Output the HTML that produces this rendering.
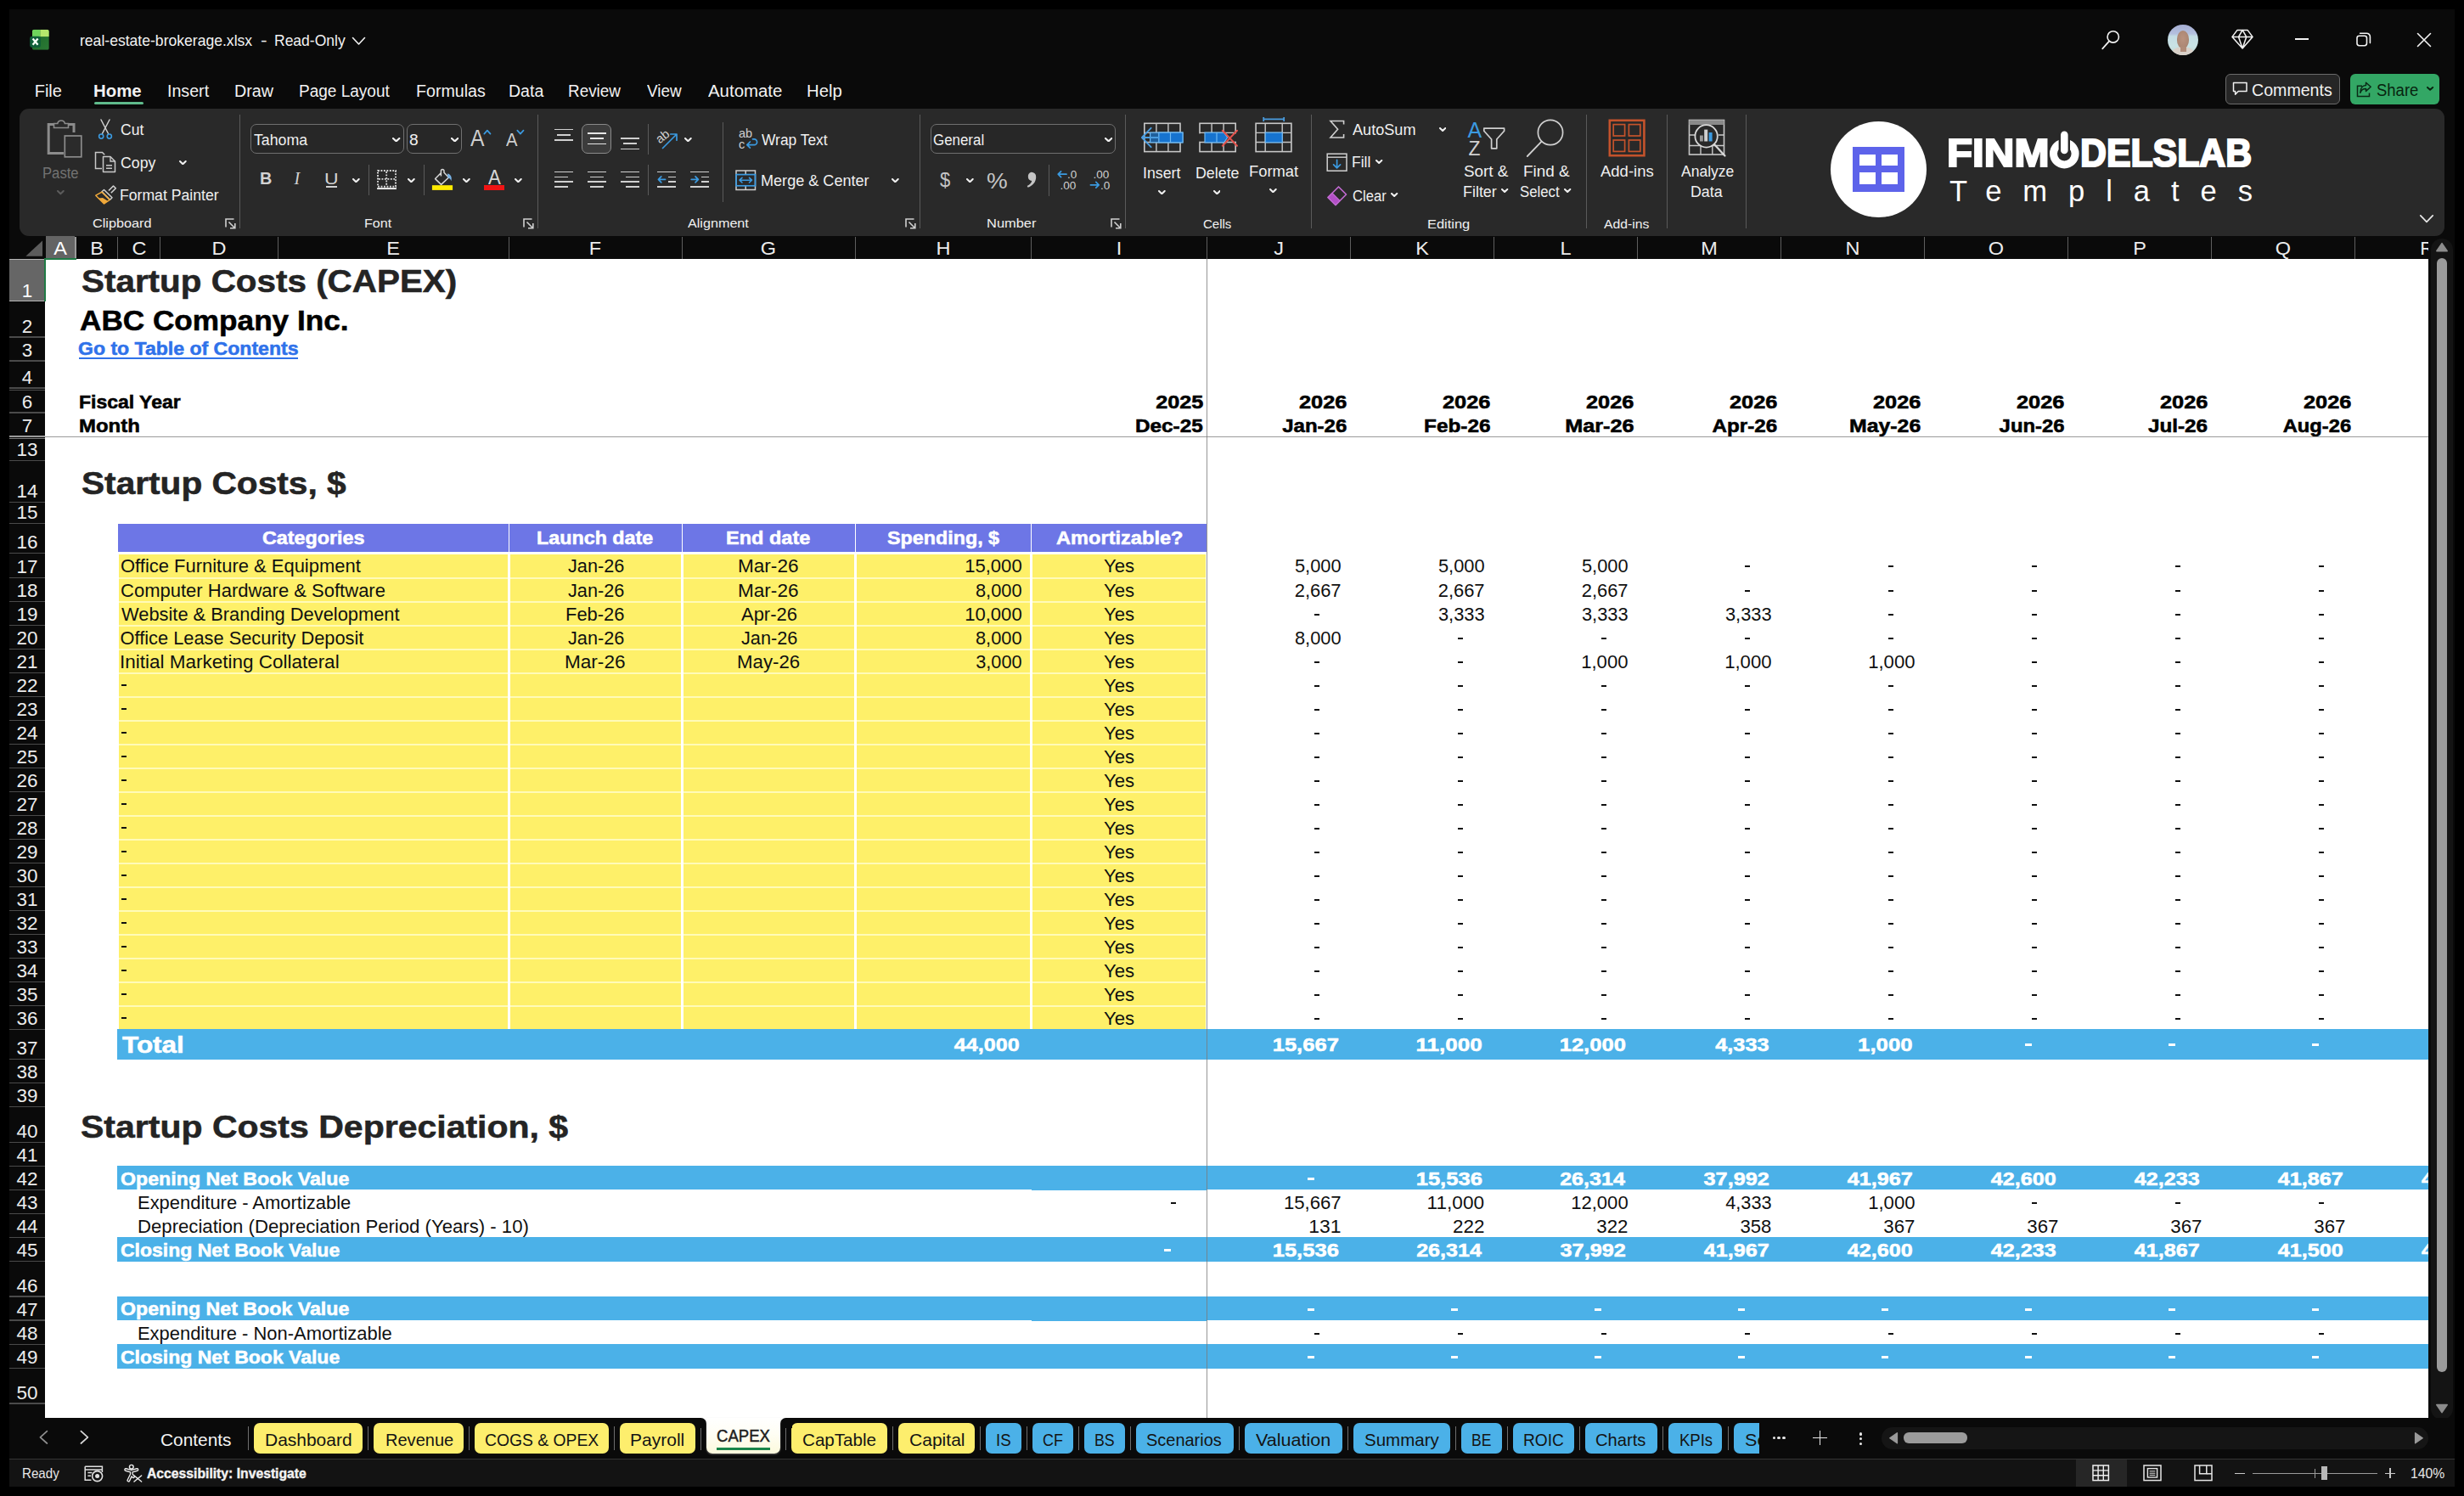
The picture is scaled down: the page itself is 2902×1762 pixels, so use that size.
<!DOCTYPE html>
<html><head><meta charset="utf-8"><title>real-estate-brokerage.xlsx</title><style>
html,body{margin:0;padding:0}
body{width:2902px;height:1762px;background:#000;overflow:hidden;position:relative;font-family:"Liberation Sans",sans-serif}
.t{position:absolute;white-space:pre;line-height:1}
.r{position:absolute;display:block}
</style></head><body>
<div class="r" style="left:11.00px;top:11.00px;width:2880.00px;height:1740.00px;background:#0a0a0a;"></div>
<svg class="r" style="left:34.00px;top:34.00px;" width="26" height="26" viewBox="0 0 26 26"><defs><clipPath id="xb"><rect x="3.9" y="0.8" width="19.9" height="24" rx="2.6"/></clipPath><linearGradient id="xg" x1="0" y1="0" x2="1" y2="1"><stop offset="0" stop-color="#1a6527"/><stop offset="1" stop-color="#2b7a35"/></linearGradient></defs><g clip-path="url(#xb)"><rect x="3.9" y="0.8" width="19.9" height="24" fill="url(#xg)"/><rect x="3.9" y="0.8" width="9.5" height="8.3" fill="#6ed45c"/><rect x="13.4" y="0.8" width="10.4" height="8.3" fill="#b5e76c"/></g><rect x="1.2" y="8.7" width="12.7" height="13.3" rx="2.4" fill="#0f5f39"/><path d="M4.6 11.5 L10.6 18.7 M10.6 11.5 L4.6 18.7" stroke="#f4fff6" stroke-width="2.3" stroke-linecap="butt"/></svg>
<div class="t " style="top:38.00px;font-size:19px;color:#f2f2f2;left:94.44px;transform:scaleX(0.9248);transform-origin:0 50%;">real-estate-brokerage.xlsx</div>
<div class="t " style="top:38.00px;font-size:19px;color:#f2f2f2;left:306.60px;transform:scaleX(1.2);transform-origin:0 50%;">-</div>
<div class="t " style="top:38.00px;font-size:19px;color:#f2f2f2;left:323.22px;transform:scaleX(0.921);transform-origin:0 50%;">Read-Only</div>
<svg class="r" style="left:413.50px;top:42.50px;" width="17" height="11" viewBox="0 0 17 11"><path d="M1.5 1.5 L8.5 9 L15.5 1.5" fill="none" stroke="#f2f2f2" stroke-width="1.6" stroke-linecap="round" stroke-linejoin="round"/></svg>
<svg class="r" style="left:2472.00px;top:34.00px;" width="26" height="28" viewBox="0 0 26 28"><circle cx="16.75" cy="9.4" r="6.7" fill="none" stroke="#f2f2f2" stroke-width="1.6"/><path d="M12 14.6 L4.2 23.4" stroke="#f2f2f2" stroke-width="1.7" stroke-linecap="round"/></svg>
<div class="r" style="left:2553px;top:28.8px;width:36px;height:36px;border-radius:50%;overflow:hidden;background:linear-gradient(#a6aed3 0%, #b4c0de 30%, #c4dde4 38%, #c9e3e5 70%, #c2d6d2 100%);"><div class="r" style="left:5px;top:26px;width:26px;height:16px;border-radius:50% 50% 0 0;background:#d9d1c9"></div><div class="r" style="left:10.6px;top:7px;width:14.8px;height:21px;border-radius:48% 48% 46% 46%;background:radial-gradient(ellipse at 50% 45%, #b9927f 0%, #ad8875 60%, #9a7a6b 100%)"></div><div class="r" style="left:14.5px;top:26.5px;width:7px;height:6px;background:#b08c79"></div></div>
<svg class="r" style="left:2628.00px;top:34.00px;" width="27" height="25" viewBox="0 0 27 25"><path d="M7 1.4 H19.05 L25 9.4 L13.1 23.05 L1 9.4 Z M1 9.4 H25 M13.1 1.4 L8.5 9.4 L13.1 23.05 L17.7 9.4 Z" fill="none" stroke="#f2f2f2" stroke-width="1.55" stroke-linejoin="round"/></svg>
<div class="r" style="left:2703.00px;top:45.20px;width:16.00px;height:1.60px;background:#f2f2f2;"></div>
<svg class="r" style="left:2774.50px;top:38.00px;" width="18" height="18" viewBox="0 0 18 18"><rect x="1" y="4.2" width="11.5" height="11.5" rx="2.6" fill="none" stroke="#f2f2f2" stroke-width="1.6"/><path d="M4.6 1.2 H12.4 a4 4 0 0 1 4 4 V12.6" fill="none" stroke="#f2f2f2" stroke-width="1.6" stroke-linecap="round"/></svg>
<svg class="r" style="left:2846.00px;top:38.00px;" width="18" height="18" viewBox="0 0 18 18"><path d="M1.5 1.5 L16.5 16.5 M16.5 1.5 L1.5 16.5" stroke="#f2f2f2" stroke-width="1.6" stroke-linecap="round"/></svg>
<div class="t " style="top:97.00px;font-size:20px;color:#f2f2f2;left:40.70px;">File</div>
<div class="t " style="top:97.00px;font-size:20px;color:#f2f2f2;font-weight:700;left:110.33px;transform:scaleX(1.0195);transform-origin:0 50%;">Home</div>
<div class="t " style="top:97.00px;font-size:20px;color:#f2f2f2;left:196.58px;transform:scaleX(0.9812);transform-origin:0 50%;">Insert</div>
<div class="t " style="top:97.00px;font-size:20px;color:#f2f2f2;left:275.82px;transform:scaleX(0.9856);transform-origin:0 50%;">Draw</div>
<div class="t " style="top:97.00px;font-size:20px;color:#f2f2f2;left:351.77px;transform:scaleX(0.9508);transform-origin:0 50%;">Page Layout</div>
<div class="t " style="top:97.00px;font-size:20px;color:#f2f2f2;left:489.73px;transform:scaleX(0.9822);transform-origin:0 50%;">Formulas</div>
<div class="t " style="top:97.00px;font-size:20px;color:#f2f2f2;left:599.13px;transform:scaleX(0.9767);transform-origin:0 50%;">Data</div>
<div class="t " style="top:97.00px;font-size:20px;color:#f2f2f2;left:669.48px;transform:scaleX(0.9437);transform-origin:0 50%;">Review</div>
<div class="t " style="top:97.00px;font-size:20px;color:#f2f2f2;left:762.20px;transform:scaleX(0.9442);transform-origin:0 50%;">View</div>
<div class="t " style="top:97.00px;font-size:20px;color:#f2f2f2;left:834.00px;transform:scaleX(1.0206);transform-origin:0 50%;">Automate</div>
<div class="t " style="top:97.00px;font-size:20px;color:#f2f2f2;left:950.18px;transform:scaleX(1.0142);transform-origin:0 50%;">Help</div>
<div class="r" style="left:111.00px;top:119.70px;width:58.00px;height:3.40px;background:#5fba8b;border-radius:2px;"></div>
<div class="r" style="left:2621px;top:87px;width:133px;height:34px;border:1.3px solid #6b6b6b;border-radius:6px;background:#262626"></div>
<svg class="r" style="left:2628.50px;top:96.00px;" width="19" height="18" viewBox="0 0 19 18"><path d="M1.5 1.5 H17 V11.5 H7.2 L3.6 15.2 V11.5 H1.5 Z" fill="none" stroke="#f2f2f2" stroke-width="1.5" stroke-linejoin="round"/></svg>
<div class="t " style="top:97.00px;font-size:19.3px;color:#f2f2f2;left:2651.98px;transform:scaleX(1.0164);transform-origin:0 50%;">Comments</div>
<div class="r" style="left:2768.00px;top:87.00px;width:105.00px;height:36.00px;background:#33a765;border-radius:6px;"></div>
<svg class="r" style="left:2774.50px;top:96.00px;" width="19" height="19" viewBox="0 0 19 19"><path d="M7 5.2 H1.5 V17.5 H15.5 V13.5" fill="none" stroke="#0a2a16" stroke-width="1.5"/><path d="M11.5 1.2 L17.2 6.3 L11.5 11.4 V8.4 C8 8.4 5.8 10 4.8 13.2 C4.8 7.8 7.6 4.6 11.5 4.4 Z" fill="none" stroke="#0a2a16" stroke-width="1.5" stroke-linejoin="round"/></svg>
<div class="t " style="top:97.00px;font-size:19.3px;color:#08240f;left:2798.84px;transform:scaleX(0.9588);transform-origin:0 50%;">Share</div>
<svg class="r" style="left:2858.40px;top:102.10px;" width="8.2" height="4.8" viewBox="0 0 8.2 4.8"><path d="M1 1 L4.1 3.8 L7.2 1" fill="none" stroke="#08240f" stroke-width="1.9500000000000002" stroke-linecap="round" stroke-linejoin="round"/></svg>
<div class="r" style="left:22.50px;top:128.00px;width:2856.50px;height:150.00px;background:#292929;border-radius:11px;"></div>
<div class="r" style="left:281.90px;top:134.60px;width:1.30px;height:134.20px;background:#5a5a5a;"></div>
<div class="r" style="left:633.00px;top:134.60px;width:1.30px;height:134.20px;background:#5a5a5a;"></div>
<div class="r" style="left:1083.00px;top:134.60px;width:1.30px;height:134.20px;background:#5a5a5a;"></div>
<div class="r" style="left:1324.90px;top:134.60px;width:1.30px;height:134.20px;background:#5a5a5a;"></div>
<div class="r" style="left:1543.90px;top:134.60px;width:1.30px;height:134.20px;background:#5a5a5a;"></div>
<div class="r" style="left:1867.70px;top:134.60px;width:1.30px;height:134.20px;background:#5a5a5a;"></div>
<div class="r" style="left:1962.80px;top:134.60px;width:1.30px;height:134.20px;background:#5a5a5a;"></div>
<div class="r" style="left:2055.90px;top:134.60px;width:1.30px;height:134.20px;background:#5a5a5a;"></div>
<svg class="r" style="left:54.00px;top:140.00px;" width="44" height="47" viewBox="0 0 44 47"><path d="M10 6.5 H3.2 V40.5 H21" fill="none" stroke="#8c8c8c" stroke-width="3"/><path d="M26 6.5 H33 V16" fill="none" stroke="#8c8c8c" stroke-width="3"/><path d="M9.5 10.5 V5.5 H13.8 a4.4 4.4 0 0 1 8.6 0 H26.5 V10.5 Z" fill="none" stroke="#8c8c8c" stroke-width="1.6"/><rect x="22.3" y="20" width="19.5" height="24.8" fill="#2b2b2b" stroke="#8c8c8c" stroke-width="1.7"/></svg>
<div class="t " style="top:196.00px;font-size:17.6px;color:#727272;left:50.28px;transform:scaleX(0.9474);transform-origin:0 50%;">Paste</div>
<svg class="r" style="left:66.85px;top:224.35px;" width="8.7" height="5.3" viewBox="0 0 8.7 5.3"><path d="M1 1 L4.35 4.3 L7.7 1" fill="none" stroke="#5c5c5c" stroke-width="2.05" stroke-linecap="round" stroke-linejoin="round"/></svg>
<svg class="r" style="left:113.00px;top:139.00px;" width="22" height="27" viewBox="0 0 22 27"><path d="M6 2 L14.6 18.5 M16 2 L7.4 18.5" stroke="#d0d0d0" stroke-width="1.5" stroke-linecap="round"/><circle cx="6.2" cy="21.6" r="2.6" fill="none" stroke="#3b9ae0" stroke-width="1.6"/><circle cx="15.8" cy="21.6" r="2.6" fill="none" stroke="#3b9ae0" stroke-width="1.6"/></svg>
<div class="t " style="top:145.00px;font-size:17.6px;color:#f0f0f0;left:141.85px;transform:scaleX(0.9962);transform-origin:0 50%;">Cut</div>
<svg class="r" style="left:111.00px;top:178.00px;" width="27" height="26" viewBox="0 0 27 26"><path d="M9 20.5 H1.5 V1.5 H9.5 L12.2 4.2" fill="none" stroke="#c8c8c8" stroke-width="1.5"/><path d="M10.5 6.5 H19 L24.5 12 V24.5 H10.5 Z" fill="#2b2b2b" stroke="#c8c8c8" stroke-width="1.5" stroke-linejoin="round"/><path d="M19 6.5 V12 H24.5 M14 16.8 H21 M14 20.3 H21" fill="none" stroke="#c8c8c8" stroke-width="1.4"/></svg>
<div class="t " style="top:184.00px;font-size:17.6px;color:#f0f0f0;left:141.85px;transform:scaleX(1.0062);transform-origin:0 50%;">Copy</div>
<svg class="r" style="left:211.05px;top:189.15px;" width="8.7" height="5.3" viewBox="0 0 8.7 5.3"><path d="M1 1 L4.35 4.3 L7.7 1" fill="none" stroke="#f0f0f0" stroke-width="2.05" stroke-linecap="round" stroke-linejoin="round"/></svg>
<svg class="r" style="left:111.00px;top:217.00px;" width="27" height="25" viewBox="0 0 27 25"><path d="M17 7.5 L22.5 2 L25.3 4.8 L19.8 10.3" fill="none" stroke="#d0d0d0" stroke-width="1.6" stroke-linejoin="round"/><path d="M11.5 6.5 L21 15.8 L18.6 18.2 L9 8.8 Z" fill="none" stroke="#d0d0d0" stroke-width="1.5" stroke-linejoin="round"/><path d="M9 9.2 L1.8 13.2 L11.6 23 L18.2 18.4 Z" fill="none" stroke="#f0a93a" stroke-width="1.5" stroke-linejoin="round"/><path d="M5 16.4 L11.6 23 L16 19.8 L10 16 Z" fill="#f0a93a"/></svg>
<div class="t " style="top:222.00px;font-size:17.6px;color:#f0f0f0;left:141.10px;transform:scaleX(1.0017);transform-origin:0 50%;">Format Painter</div>
<div class="t " style="top:255.00px;font-size:15.4px;color:#f0f0f0;left:108.51px;transform:scaleX(1.0553);transform-origin:0 50%;">Clipboard</div>
<svg class="r" style="left:264.60px;top:256.60px;" width="13" height="13" viewBox="0 0 13 13"><path d="M1 10.5 V1 H10.5" fill="none" stroke="#d0d0d0" stroke-width="1.6"/><path d="M4.5 4.5 L11.5 11.5 M6 11.8 H11.8 V6" fill="none" stroke="#d0d0d0" stroke-width="1.6"/></svg>
<div class="r" style="left:295px;top:146px;width:179.00000000000003px;height:33.4px;border:1.3px solid #707070;border-radius:7px;background:#272727"></div>
<div class="t " style="top:157.00px;font-size:17.6px;color:#f0f0f0;left:298.65px;transform:scaleX(1.0088);transform-origin:0 50%;">Tahoma</div>
<svg class="r" style="left:462.45px;top:162.10px;" width="9.3" height="5.3999999999999995" viewBox="0 0 9.3 5.3999999999999995"><path d="M1 1 L4.65 4.3999999999999995 L8.3 1" fill="none" stroke="#f0f0f0" stroke-width="2.15" stroke-linecap="round" stroke-linejoin="round"/></svg>
<div class="r" style="left:479.4px;top:146px;width:62.799999999999976px;height:33.4px;border:1.3px solid #707070;border-radius:7px;background:#272727"></div>
<div class="t " style="top:157.00px;font-size:17.6px;color:#f0f0f0;left:481.98px;transform:scaleX(1.0909);transform-origin:0 50%;">8</div>
<svg class="r" style="left:530.65px;top:162.10px;" width="9.3" height="5.3999999999999995" viewBox="0 0 9.3 5.3999999999999995"><path d="M1 1 L4.65 4.3999999999999995 L8.3 1" fill="none" stroke="#f0f0f0" stroke-width="2.15" stroke-linecap="round" stroke-linejoin="round"/></svg>
<div class="t " style="top:149.00px;font-size:27.5px;color:#cfcfcf;left:554.40px;transform:scaleX(0.8986);transform-origin:0 50%;">A</div>
<svg class="r" style="left:569.00px;top:152.00px;" width="10" height="7" viewBox="0 0 10 7"><path d="M1.3 5.6 L4.9 1.6 L8.5 5.6" fill="none" stroke="#3b9ae0" stroke-width="1.7" stroke-linecap="round" stroke-linejoin="round"/></svg>
<div class="t " style="top:154.00px;font-size:22px;color:#cfcfcf;left:595.60px;transform:scaleX(0.9172);transform-origin:0 50%;">A</div>
<svg class="r" style="left:607.60px;top:152.00px;" width="10" height="7" viewBox="0 0 10 7"><path d="M1.3 1.6 L4.9 5.6 L8.5 1.6" fill="none" stroke="#3b9ae0" stroke-width="1.7" stroke-linecap="round" stroke-linejoin="round"/></svg>
<div class="t " style="top:201.00px;font-size:19.5px;color:#d2d2d2;font-weight:700;left:305.53px;transform:scaleX(1.0167);transform-origin:0 50%;">B</div>
<div class="t" style="left:346.5px;top:200px;font-size:20px;color:#d2d2d2;font-family:'Liberation Serif',serif;font-style:italic;">I</div>
<div class="t " style="top:201.00px;font-size:19px;color:#d2d2d2;left:382.09px;transform:scaleX(1.2093);transform-origin:0 50%;">U</div>
<div class="r" style="left:383.60px;top:219.30px;width:13.60px;height:1.50px;background:#d2d2d2;"></div>
<svg class="r" style="left:414.85px;top:209.95px;" width="8.7" height="5.3" viewBox="0 0 8.7 5.3"><path d="M1 1 L4.35 4.3 L7.7 1" fill="none" stroke="#f0f0f0" stroke-width="2.05" stroke-linecap="round" stroke-linejoin="round"/></svg>
<div class="r" style="left:433.60px;top:194.00px;width:1.30px;height:36.40px;background:#5a5a5a;"></div>
<svg class="r" style="left:443.00px;top:199.00px;" width="26" height="25" viewBox="0 0 26 25"><rect x="2" y="2" width="21" height="18.8" fill="none" stroke="#d8d8d8" stroke-width="1.9" stroke-dasharray="1.9 1.56"/><path d="M12.2 3 V20 M3 11.9 H22" stroke="#d8d8d8" stroke-width="1.8" stroke-dasharray="1.9 1.56"/><path d="M1.1 23.1 H23.9" stroke="#f4f4f4" stroke-width="1.9"/></svg>
<svg class="r" style="left:479.95px;top:209.95px;" width="8.7" height="5.3" viewBox="0 0 8.7 5.3"><path d="M1 1 L4.35 4.3 L7.7 1" fill="none" stroke="#f0f0f0" stroke-width="2.05" stroke-linecap="round" stroke-linejoin="round"/></svg>
<div class="r" style="left:498.90px;top:194.00px;width:1.30px;height:36.40px;background:#5a5a5a;"></div>
<svg class="r" style="left:508.00px;top:198.00px;" width="27" height="27" viewBox="0 0 27 27"><path d="M11.5 5.5 L4.6 12.6 L11.6 19.4 L20.5 11 L15 5.2 V3.4 a1.8 1.8 0 0 0 -3.6 0 V9.5" fill="none" stroke="#d6d6d6" stroke-width="1.5" stroke-linejoin="round"/><path d="M19 6.6 C23 7.2 24.6 11 23.4 15.2 C22.6 12.6 21.2 11.6 19.4 11.2 Z" fill="#79b3e6"/><rect x="0.9" y="20.2" width="24.2" height="5.7" fill="#ffeb00"/></svg>
<svg class="r" style="left:544.85px;top:209.95px;" width="8.7" height="5.3" viewBox="0 0 8.7 5.3"><path d="M1 1 L4.35 4.3 L7.7 1" fill="none" stroke="#f0f0f0" stroke-width="2.05" stroke-linecap="round" stroke-linejoin="round"/></svg>
<div class="t " style="top:198.00px;font-size:23.5px;color:#d6d6d6;left:574.60px;transform:scaleX(0.9484);transform-origin:0 50%;">A</div>
<div class="r" style="left:569.80px;top:218.00px;width:24.30px;height:5.90px;background:#f01414;"></div>
<svg class="r" style="left:605.85px;top:209.95px;" width="8.7" height="5.3" viewBox="0 0 8.7 5.3"><path d="M1 1 L4.35 4.3 L7.7 1" fill="none" stroke="#f0f0f0" stroke-width="2.05" stroke-linecap="round" stroke-linejoin="round"/></svg>
<div class="t " style="top:255.00px;font-size:15.4px;color:#f0f0f0;left:428.89px;transform:scaleX(1.0441);transform-origin:0 50%;">Font</div>
<svg class="r" style="left:615.80px;top:256.60px;" width="13" height="13" viewBox="0 0 13 13"><path d="M1 10.5 V1 H10.5" fill="none" stroke="#d0d0d0" stroke-width="1.6"/><path d="M4.5 4.5 L11.5 11.5 M6 11.8 H11.8 V6" fill="none" stroke="#d0d0d0" stroke-width="1.6"/></svg>
<div class="r" style="left:652.90px;top:151.70px;width:22.00px;height:1.60px;background:#d0d0d0;"></div>
<div class="r" style="left:655.90px;top:158.00px;width:16.00px;height:1.60px;background:#d0d0d0;"></div>
<div class="r" style="left:652.90px;top:164.40px;width:22.00px;height:1.60px;background:#d0d0d0;"></div>
<div class="r" style="left:685.3px;top:146.3px;width:32.8px;height:32.6px;border:1.3px solid #8a8a8a;border-radius:7px;background:#3c3c3c"></div>
<div class="r" style="left:692.00px;top:156.10px;width:22.00px;height:1.60px;background:#e6e6e6;"></div>
<div class="r" style="left:695.00px;top:162.30px;width:16.00px;height:1.60px;background:#e6e6e6;"></div>
<div class="r" style="left:692.00px;top:168.50px;width:22.00px;height:1.60px;background:#e6e6e6;"></div>
<div class="r" style="left:731.00px;top:162.20px;width:22.00px;height:1.60px;background:#d0d0d0;"></div>
<div class="r" style="left:734.00px;top:168.40px;width:16.00px;height:1.60px;background:#d0d0d0;"></div>
<div class="r" style="left:731.00px;top:174.60px;width:22.00px;height:1.60px;background:#d0d0d0;"></div>
<div class="r" style="left:762.90px;top:145.80px;width:1.30px;height:36.20px;background:#5a5a5a;"></div>
<svg class="r" style="left:771.00px;top:149.00px;" width="29" height="28" viewBox="0 0 29 28"><text x="2" y="17" font-family="Liberation Sans" font-size="14.5" fill="#d0d0d0" transform="rotate(-38 9 13)">ab</text><path d="M9.5 25.5 L25.5 9.5 M18.8 9 H26 V16.2" fill="none" stroke="#3b9ae0" stroke-width="1.7" stroke-linecap="round" stroke-linejoin="round"/></svg>
<svg class="r" style="left:805.95px;top:161.75px;" width="8.7" height="5.3" viewBox="0 0 8.7 5.3"><path d="M1 1 L4.35 4.3 L7.7 1" fill="none" stroke="#f0f0f0" stroke-width="2.05" stroke-linecap="round" stroke-linejoin="round"/></svg>
<div class="r" style="left:850.70px;top:143.80px;width:1.30px;height:94.50px;background:#5a5a5a;"></div>
<svg class="r" style="left:869.00px;top:150.00px;" width="24" height="27" viewBox="0 0 24 27"><text x="1" y="11.6" font-family="Liberation Sans" font-size="14.5" fill="#d0d0d0">ab</text><text x="1" y="24.6" font-family="Liberation Sans" font-size="14.5" fill="#d0d0d0">c</text><path d="M17.5 13.8 H19.2 a3.3 3.3 0 0 1 0 6.8 H11.2 M14.4 17 L10.8 20.6 L14.4 24.2" fill="none" stroke="#3b9ae0" stroke-width="1.7" stroke-linecap="round" stroke-linejoin="round"/></svg>
<div class="t " style="top:157.00px;font-size:17.6px;color:#f0f0f0;left:897.40px;transform:scaleX(0.9879);transform-origin:0 50%;">Wrap Text</div>
<div class="r" style="left:652.90px;top:201.70px;width:22.00px;height:1.60px;background:#d0d0d0;"></div>
<div class="r" style="left:652.90px;top:207.60px;width:16.00px;height:1.60px;background:#d0d0d0;"></div>
<div class="r" style="left:652.90px;top:213.40px;width:22.00px;height:1.60px;background:#d0d0d0;"></div>
<div class="r" style="left:652.90px;top:219.30px;width:16.00px;height:1.60px;background:#d0d0d0;"></div>
<div class="r" style="left:692.00px;top:201.70px;width:22.00px;height:1.60px;background:#d0d0d0;"></div>
<div class="r" style="left:695.00px;top:207.60px;width:16.00px;height:1.60px;background:#d0d0d0;"></div>
<div class="r" style="left:692.00px;top:213.40px;width:22.00px;height:1.60px;background:#d0d0d0;"></div>
<div class="r" style="left:695.00px;top:219.30px;width:16.00px;height:1.60px;background:#d0d0d0;"></div>
<div class="r" style="left:731.00px;top:201.70px;width:22.00px;height:1.60px;background:#d0d0d0;"></div>
<div class="r" style="left:737.00px;top:207.60px;width:16.00px;height:1.60px;background:#d0d0d0;"></div>
<div class="r" style="left:731.00px;top:213.40px;width:22.00px;height:1.60px;background:#d0d0d0;"></div>
<div class="r" style="left:737.00px;top:219.30px;width:16.00px;height:1.60px;background:#d0d0d0;"></div>
<div class="r" style="left:762.90px;top:194.40px;width:1.30px;height:35.40px;background:#5a5a5a;"></div>
<div class="r" style="left:774.00px;top:201.70px;width:22.00px;height:1.60px;background:#d0d0d0;"></div>
<div class="r" style="left:774.00px;top:219.30px;width:22.00px;height:1.60px;background:#d0d0d0;"></div>
<div class="r" style="left:786.50px;top:207.60px;width:9.50px;height:1.60px;background:#d0d0d0;"></div>
<div class="r" style="left:786.50px;top:213.40px;width:9.50px;height:1.60px;background:#d0d0d0;"></div>
<svg class="r" style="left:774.00px;top:206.00px;" width="11" height="11" viewBox="0 0 11 11"><path d="M9.6 5.3 H1.6 M4.8 1.8 L1.4 5.3 L4.8 8.8" fill="none" stroke="#3b9ae0" stroke-width="1.7" stroke-linecap="round" stroke-linejoin="round"/></svg>
<div class="r" style="left:813.10px;top:201.70px;width:22.00px;height:1.60px;background:#d0d0d0;"></div>
<div class="r" style="left:813.10px;top:219.30px;width:22.00px;height:1.60px;background:#d0d0d0;"></div>
<div class="r" style="left:825.60px;top:207.60px;width:9.50px;height:1.60px;background:#d0d0d0;"></div>
<div class="r" style="left:825.60px;top:213.40px;width:9.50px;height:1.60px;background:#d0d0d0;"></div>
<svg class="r" style="left:813.10px;top:206.00px;" width="11" height="11" viewBox="0 0 11 11"><path d="M1.2 5.3 H9.2 M6 1.8 L9.4 5.3 L6 8.8" fill="none" stroke="#3b9ae0" stroke-width="1.7" stroke-linecap="round" stroke-linejoin="round"/></svg>
<svg class="r" style="left:866.00px;top:199.50px;" width="25" height="25" viewBox="0 0 25 25"><rect x="1" y="1" width="22.5" height="22.5" fill="none" stroke="#d0d0d0" stroke-width="1.5"/><path d="M12.2 1 V5.5 M12.2 19 V23.5" stroke="#d0d0d0" stroke-width="1.5"/><rect x="1" y="5.6" width="22.5" height="13.2" fill="none" stroke="#3b9ae0" stroke-width="1.7"/><path d="M5.2 12.2 H19.3 M8 9.4 L5 12.2 L8 15 M16.5 9.4 L19.5 12.2 L16.5 15" fill="none" stroke="#3b9ae0" stroke-width="1.6" stroke-linecap="round" stroke-linejoin="round"/></svg>
<div class="t " style="top:205.00px;font-size:17.6px;color:#f0f0f0;left:895.86px;transform:scaleX(1.0278);transform-origin:0 50%;">Merge &amp; Center</div>
<svg class="r" style="left:1050.05px;top:209.95px;" width="8.7" height="5.3" viewBox="0 0 8.7 5.3"><path d="M1 1 L4.35 4.3 L7.7 1" fill="none" stroke="#f0f0f0" stroke-width="2.05" stroke-linecap="round" stroke-linejoin="round"/></svg>
<div class="t " style="top:255.00px;font-size:15.4px;color:#f0f0f0;left:810.30px;transform:scaleX(1.0496);transform-origin:0 50%;">Alignment</div>
<svg class="r" style="left:1065.60px;top:256.60px;" width="13" height="13" viewBox="0 0 13 13"><path d="M1 10.5 V1 H10.5" fill="none" stroke="#d0d0d0" stroke-width="1.6"/><path d="M4.5 4.5 L11.5 11.5 M6 11.8 H11.8 V6" fill="none" stroke="#d0d0d0" stroke-width="1.6"/></svg>
<div class="r" style="left:1096px;top:146.3px;width:215.6px;height:32.8px;border:1.3px solid #707070;border-radius:7px;background:#272727"></div>
<div class="t " style="top:157.00px;font-size:17.6px;color:#f0f0f0;left:1098.78px;transform:scaleX(0.9613);transform-origin:0 50%;">General</div>
<svg class="r" style="left:1300.75px;top:162.10px;" width="9.3" height="5.3999999999999995" viewBox="0 0 9.3 5.3999999999999995"><path d="M1 1 L4.65 4.3999999999999995 L8.3 1" fill="none" stroke="#f0f0f0" stroke-width="2.15" stroke-linecap="round" stroke-linejoin="round"/></svg>
<div class="t " style="top:200.00px;font-size:24px;color:#c4c4c4;left:1107.07px;transform:scaleX(0.9176);transform-origin:0 50%;">$</div>
<svg class="r" style="left:1137.95px;top:209.95px;" width="8.7" height="5.3" viewBox="0 0 8.7 5.3"><path d="M1 1 L4.35 4.3 L7.7 1" fill="none" stroke="#f0f0f0" stroke-width="2.05" stroke-linecap="round" stroke-linejoin="round"/></svg>
<div class="t " style="top:200.00px;font-size:26.5px;color:#c4c4c4;left:1162.35px;transform:scaleX(1.0483);transform-origin:0 50%;">%</div>
<svg class="r" style="left:1207.50px;top:202.00px;" width="14" height="21" viewBox="0 0 14 21"><path d="M6.6 0.8 a5.3 5.3 0 0 1 5.6 5.6 c0 5.8 -3.8 10.2 -9.6 12.4 l-0.9 -1.7 c3.3 -1.5 5.2 -3.6 5.5 -6 a5.3 5.3 0 0 1 -0.6 -10.3z" fill="#c4c4c4"/></svg>
<div class="r" style="left:1234.70px;top:193.60px;width:1.30px;height:37.10px;background:#5a5a5a;"></div>
<svg class="r" style="left:1243.50px;top:198.50px;" width="26" height="25" viewBox="0 0 26 25"><path d="M12 6.2 H2.4 M5.6 2.8 L2.2 6.2 L5.6 9.6" fill="none" stroke="#3b9ae0" stroke-width="1.7" stroke-linecap="round" stroke-linejoin="round"/><text x="13" y="11" font-family="Liberation Sans" font-size="13.5" fill="#d0d0d0">.0</text><text x="4.4" y="23.6" font-family="Liberation Sans" font-size="13.5" fill="#d0d0d0">.00</text></svg>
<svg class="r" style="left:1282.50px;top:198.50px;" width="26" height="25" viewBox="0 0 26 25"><text x="4.4" y="11" font-family="Liberation Sans" font-size="13.5" fill="#d0d0d0">.00</text><path d="M1.4 18.8 H11 M7.8 15.4 L11.2 18.8 L7.8 22.2" fill="none" stroke="#3b9ae0" stroke-width="1.7" stroke-linecap="round" stroke-linejoin="round"/><text x="13" y="23.6" font-family="Liberation Sans" font-size="13.5" fill="#d0d0d0">.0</text></svg>
<div class="t " style="top:255.00px;font-size:15.4px;color:#f0f0f0;left:1162.06px;transform:scaleX(1.0685);transform-origin:0 50%;">Number</div>
<svg class="r" style="left:1307.60px;top:256.80px;" width="13" height="13" viewBox="0 0 13 13"><path d="M1 10.5 V1 H10.5" fill="none" stroke="#d0d0d0" stroke-width="1.6"/><path d="M4.5 4.5 L11.5 11.5 M6 11.8 H11.8 V6" fill="none" stroke="#d0d0d0" stroke-width="1.6"/></svg>
<svg class="r" style="left:1343.00px;top:136.00px;" width="54" height="44" viewBox="0 0 54 44"><rect x="4.8" y="9.3" width="42.2" height="33.3" fill="none" stroke="#c8c8c8" stroke-width="1.6"/><path d="M18.9 9.3 V42.599999999999994" stroke="#c8c8c8" stroke-width="1.4"/><path d="M32.9 9.3 V42.599999999999994" stroke="#c8c8c8" stroke-width="1.4"/><path d="M4.8 20.4 H47.0" stroke="#c8c8c8" stroke-width="1.4"/><path d="M4.8 31.5 H47.0" stroke="#c8c8c8" stroke-width="1.4"/><rect x="11.6" y="20.1" width="38.4" height="11.7" fill="#1f5f9c" stroke="#6fb9f3" stroke-width="1.2"/><rect x="21.8" y="20.1" width="28.2" height="11.7" fill="#1673cf" stroke="#6fb9f3" stroke-width="1.2"/><path d="M35.5 20.1 V31.8" stroke="#6fb9f3" stroke-width="1.2"/><path d="M21 26 H2.4 M12.6 14.8 L1.9 26 L12.6 37.2" fill="none" stroke="#4a9de0" stroke-width="1.9" stroke-linecap="round" stroke-linejoin="round"/></svg>
<div class="t " style="top:196.00px;font-size:17.6px;color:#f0f0f0;left:1346.39px;transform:scaleX(1.0071);transform-origin:0 50%;">Insert</div>
<svg class="r" style="left:1363.95px;top:224.05px;" width="8.7" height="5.3" viewBox="0 0 8.7 5.3"><path d="M1 1 L4.35 4.3 L7.7 1" fill="none" stroke="#f0f0f0" stroke-width="2.05" stroke-linecap="round" stroke-linejoin="round"/></svg>
<svg class="r" style="left:1408.00px;top:136.00px;" width="54" height="44" viewBox="0 0 54 44"><rect x="5" y="9.3" width="42.2" height="33.3" fill="none" stroke="#c8c8c8" stroke-width="1.6"/><path d="M19.1 9.3 V42.599999999999994" stroke="#c8c8c8" stroke-width="1.4"/><path d="M33.1 9.3 V42.599999999999994" stroke="#c8c8c8" stroke-width="1.4"/><path d="M5 20.4 H47.2" stroke="#c8c8c8" stroke-width="1.4"/><path d="M5 31.5 H47.2" stroke="#c8c8c8" stroke-width="1.4"/><rect x="3.8" y="21.4" width="2.4" height="9.2" fill="#292929"/><rect x="46" y="21.4" width="2.4" height="9.2" fill="#292929"/><path d="M11 20.1 H33.6 L37.6 26 L33.6 31.8 H11 Z" fill="#1673cf" stroke="#6fb9f3" stroke-width="1.2"/><path d="M25 20.1 V31.8" stroke="#6fb9f3" stroke-width="1.2"/><path d="M31.8 17.8 L49 35.8 M49 17.8 L31.8 35.8" stroke="#e2524c" stroke-width="2" stroke-linecap="round"/></svg>
<div class="t " style="top:196.00px;font-size:17.6px;color:#f0f0f0;left:1408.28px;transform:scaleX(1.0124);transform-origin:0 50%;">Delete</div>
<svg class="r" style="left:1428.75px;top:224.05px;" width="8.7" height="5.3" viewBox="0 0 8.7 5.3"><path d="M1 1 L4.35 4.3 L7.7 1" fill="none" stroke="#f0f0f0" stroke-width="2.05" stroke-linecap="round" stroke-linejoin="round"/></svg>
<svg class="r" style="left:1474.00px;top:136.00px;" width="54" height="44" viewBox="0 0 54 44"><rect x="5.1" y="9.3" width="41.8" height="33.3" fill="none" stroke="#c8c8c8" stroke-width="1.6"/><path d="M16.2 9.3 V42.599999999999994" stroke="#c8c8c8" stroke-width="1.4"/><path d="M36.2 9.3 V42.599999999999994" stroke="#c8c8c8" stroke-width="1.4"/><path d="M5.1 20.4 H46.9" stroke="#c8c8c8" stroke-width="1.4"/><path d="M5.1 31.5 H46.9" stroke="#c8c8c8" stroke-width="1.4"/><rect x="16.2" y="20.1" width="20" height="11.7" fill="#1673cf" stroke="#6fb9f3" stroke-width="1.2"/><path d="M14.2 4.4 H38.2 M14.2 2 V6.9 M38.2 2 V6.9" stroke="#4a9de0" stroke-width="1.7"/></svg>
<div class="t " style="top:194.00px;font-size:17.6px;color:#f0f0f0;left:1471.03px;transform:scaleX(1.0444);transform-origin:0 50%;">Format</div>
<svg class="r" style="left:1495.05px;top:222.05px;" width="8.7" height="5.3" viewBox="0 0 8.7 5.3"><path d="M1 1 L4.35 4.3 L7.7 1" fill="none" stroke="#f0f0f0" stroke-width="2.05" stroke-linecap="round" stroke-linejoin="round"/></svg>
<div class="t " style="top:256.00px;font-size:15.4px;color:#f0f0f0;left:1417.27px;transform:scaleX(0.9758);transform-origin:0 50%;">Cells</div>
<svg class="r" style="left:1565.00px;top:140.50px;" width="20" height="23" viewBox="0 0 20 23"><path d="M17.6 5.6 V1.5 H2 L10.6 11.2 L2 21 H17.6 V17" fill="none" stroke="#d0d0d0" stroke-width="1.6" stroke-linejoin="miter"/></svg>
<div class="t " style="top:145.00px;font-size:17.6px;color:#f0f0f0;left:1593.30px;transform:scaleX(1.0302);transform-origin:0 50%;">AutoSum</div>
<svg class="r" style="left:1694.85px;top:150.05px;" width="8.3" height="5.1" viewBox="0 0 8.3 5.1"><path d="M1 1 L4.15 4.1 L7.3 1" fill="none" stroke="#f0f0f0" stroke-width="2.05" stroke-linecap="round" stroke-linejoin="round"/></svg>
<svg class="r" style="left:1562.00px;top:179.50px;" width="26" height="23" viewBox="0 0 26 23"><rect x="1.2" y="1.2" width="22.8" height="20" fill="none" stroke="#d0d0d0" stroke-width="1.5"/><path d="M1.2 5.2 H24" stroke="#d0d0d0" stroke-width="1.4"/><path d="M12.6 8.4 V17.6 M8.6 13.8 L12.6 17.8 L16.6 13.8" fill="none" stroke="#3b9ae0" stroke-width="1.7" stroke-linecap="round" stroke-linejoin="round"/></svg>
<div class="t " style="top:183.00px;font-size:17.6px;color:#f0f0f0;left:1592.20px;transform:scaleX(0.9975);transform-origin:0 50%;">Fill</div>
<svg class="r" style="left:1620.25px;top:187.85px;" width="8.3" height="5.1" viewBox="0 0 8.3 5.1"><path d="M1 1 L4.15 4.1 L7.3 1" fill="none" stroke="#f0f0f0" stroke-width="2.05" stroke-linecap="round" stroke-linejoin="round"/></svg>
<svg class="r" style="left:1562.00px;top:217.50px;" width="26" height="25" viewBox="0 0 26 25"><path d="M2 14.5 L14.5 2 L23.5 11 L11 23.5 Z" fill="none" stroke="#c06ad0" stroke-width="1.7" stroke-linejoin="round"/><path d="M2 14.5 L7 9.5 L16 18.5 L11 23.5 Z" fill="#b24fc6" stroke="#c06ad0" stroke-width="1.2" stroke-linejoin="round"/></svg>
<div class="t " style="top:223.00px;font-size:17.6px;color:#f0f0f0;left:1592.59px;transform:scaleX(0.9439);transform-origin:0 50%;">Clear</div>
<svg class="r" style="left:1638.45px;top:226.65px;" width="8.3" height="5.1" viewBox="0 0 8.3 5.1"><path d="M1 1 L4.15 4.1 L7.3 1" fill="none" stroke="#f0f0f0" stroke-width="2.05" stroke-linecap="round" stroke-linejoin="round"/></svg>
<svg class="r" style="left:1727.00px;top:139.00px;" width="48" height="45" viewBox="0 0 48 45"><text x="1.5" y="23" font-family="Liberation Sans" font-size="25" fill="#3b9ae0">A</text><text x="2.5" y="43.5" font-family="Liberation Sans" font-size="23" fill="#d0d0d0">Z</text><path d="M20.8 12.2 H44.6 V15.2 L35.8 25 V35.8 H29.6 V25 L20.8 15.2 Z" fill="none" stroke="#d0d0d0" stroke-width="1.7" stroke-linejoin="round"/></svg>
<div class="t " style="top:194.00px;font-size:17.6px;color:#f0f0f0;left:1724.40px;transform:scaleX(1.0729);transform-origin:0 50%;">Sort &amp;</div>
<div class="t " style="top:218.00px;font-size:17.6px;color:#f0f0f0;left:1722.97px;transform:scaleX(1.0174);transform-origin:0 50%;">Filter</div>
<svg class="r" style="left:1768.25px;top:221.85px;" width="8.3" height="5.1" viewBox="0 0 8.3 5.1"><path d="M1 1 L4.15 4.1 L7.3 1" fill="none" stroke="#f0f0f0" stroke-width="2.05" stroke-linecap="round" stroke-linejoin="round"/></svg>
<svg class="r" style="left:1796.00px;top:139.00px;" width="48" height="47" viewBox="0 0 48 47"><circle cx="30" cy="17" r="14.6" fill="none" stroke="#d0d0d0" stroke-width="1.7"/><path d="M19.6 27.6 L2.8 45" stroke="#d0d0d0" stroke-width="1.8" stroke-linecap="round"/></svg>
<div class="t " style="top:194.00px;font-size:17.6px;color:#f0f0f0;left:1793.69px;transform:scaleX(1.0735);transform-origin:0 50%;">Find &amp;</div>
<div class="t " style="top:218.00px;font-size:17.6px;color:#f0f0f0;left:1789.78px;transform:scaleX(0.9542);transform-origin:0 50%;">Select</div>
<svg class="r" style="left:1842.25px;top:221.85px;" width="8.3" height="5.1" viewBox="0 0 8.3 5.1"><path d="M1 1 L4.15 4.1 L7.3 1" fill="none" stroke="#f0f0f0" stroke-width="2.05" stroke-linecap="round" stroke-linejoin="round"/></svg>
<div class="t " style="top:256.00px;font-size:15.4px;color:#f0f0f0;left:1681.06px;transform:scaleX(1.0682);transform-origin:0 50%;">Editing</div>
<svg class="r" style="left:1894.00px;top:139.50px;" width="45" height="46" viewBox="0 0 45 46"><rect x="1.8" y="1.8" width="40.6" height="41.4" fill="none" stroke="#c4532c" stroke-width="2.6"/><rect x="6.2" y="6.6" width="13.4" height="13.4" fill="none" stroke="#c4532c" stroke-width="1.7"/><rect x="24.4" y="6.6" width="13.4" height="13.4" fill="none" stroke="#c4532c" stroke-width="1.7"/><rect x="6.2" y="25" width="13.4" height="13.4" fill="none" stroke="#c4532c" stroke-width="1.7"/><rect x="24.4" y="25" width="13.4" height="13.4" fill="none" stroke="#c4532c" stroke-width="1.7"/></svg>
<div class="t " style="top:194.00px;font-size:17.6px;color:#f0f0f0;left:1885.20px;transform:scaleX(1.0508);transform-origin:0 50%;">Add-ins</div>
<div class="t " style="top:256.00px;font-size:15.4px;color:#f0f0f0;left:1888.50px;transform:scaleX(1.0242);transform-origin:0 50%;">Add-ins</div>
<svg class="r" style="left:1987.50px;top:140.00px;" width="46" height="46" viewBox="0 0 46 46"><rect x="1.5" y="1.5" width="41" height="40.5" fill="none" stroke="#c8c8c8" stroke-width="1.6"/><rect x="1.5" y="1.5" width="41" height="5.5" fill="#8a8a8a"/><path d="M1.5 19 H8 M36 19 H42.5 M1.5 31.5 H42.5 M15 31.5 V42 M28.8 31.5 V42" stroke="#c8c8c8" stroke-width="1.4"/><circle cx="21.6" cy="20.4" r="13.2" fill="#292929" stroke="#d8d8d8" stroke-width="1.8"/><rect x="14" y="19.5" width="3.8" height="7" fill="#9a9a9a"/><rect x="19.2" y="12.6" width="4" height="13.9" fill="#d0d0d0"/><rect x="24.6" y="16" width="4" height="10.5" fill="#3b9ae0"/><path d="M31 30 L43.5 43.5" stroke="#d8d8d8" stroke-width="2.2" stroke-linecap="round"/></svg>
<div class="t " style="top:194.00px;font-size:17.6px;color:#f0f0f0;left:1980.00px;transform:scaleX(0.9943);transform-origin:0 50%;">Analyze</div>
<div class="t " style="top:218.00px;font-size:17.6px;color:#f0f0f0;left:1990.98px;transform:scaleX(1.0126);transform-origin:0 50%;">Data</div>
<div class="r" style="left:2156px;top:142.5px;width:113px;height:113px;border-radius:50%;background:#fff"></div>
<div class="r" style="left:2181.60px;top:172.70px;width:61.40px;height:53.20px;background:#5d63ea;"></div>
<div class="r" style="left:2190.00px;top:181.80px;width:18.60px;height:13.70px;background:#fff;"></div>
<div class="r" style="left:2190.00px;top:203.40px;width:18.60px;height:14.10px;background:#fff;"></div>
<div class="r" style="left:2216.10px;top:181.80px;width:18.60px;height:13.70px;background:#fff;"></div>
<div class="r" style="left:2216.10px;top:203.40px;width:18.60px;height:14.10px;background:#fff;"></div>
<div class="t " style="top:157.00px;font-size:46.8px;color:#fff;font-weight:700;left:2293.14px;transform:scaleX(1.0531);transform-origin:0 50%;-webkit-text-stroke:2.2px #fff;">FINM</div>
<div class="t " style="top:157.00px;font-size:46.8px;color:#fff;font-weight:700;left:2449.96px;transform:scaleX(0.9148);transform-origin:0 50%;-webkit-text-stroke:2.2px #fff;">DELSLAB</div>
<svg class="r" style="left:2412.00px;top:152.00px;" width="40" height="48" viewBox="0 0 40 48"><circle cx="19.3" cy="29.1" r="12.8" fill="none" stroke="#fff" stroke-width="9"/><rect x="12.6" y="0" width="13.4" height="31.5" rx="5" fill="#292929"/><rect x="15" y="2.6" width="8.6" height="26.6" rx="4.3" fill="#fff"/></svg>
<div class="t " style="top:208.00px;font-size:34.7px;color:#fff;left:2295.55px;transform:scaleX(0.9968);transform-origin:0 50%;letter-spacing:25px;">Templates</div>
<svg class="r" style="left:2848.50px;top:252.00px;" width="18" height="12" viewBox="0 0 18 12"><path d="M1.8 1.8 L9 9.4 L16.2 1.8" fill="none" stroke="#e6e6e6" stroke-width="1.7" stroke-linecap="round" stroke-linejoin="round"/></svg>
<div class="r" style="left:53.00px;top:305.00px;width:2807.00px;height:1365.00px;background:#fff;"></div>
<div class="r" style="left:53.50px;top:278.00px;width:34.90px;height:26.20px;background:#646464;"></div>
<div class="t " style="top:282.00px;font-size:22.6px;color:#fff;left:71.25px;transform:translateX(-50%) scaleX(1.04);">A</div>
<div class="r" style="left:88.40px;top:279.00px;width:1.20px;height:25.50px;background:#9a9a9a;"></div>
<div class="t " style="top:282.00px;font-size:22.6px;color:#ececec;left:113.75px;transform:translateX(-50%) scaleX(1.04);">B</div>
<div class="r" style="left:137.90px;top:279.00px;width:1.20px;height:25.50px;background:#5e5e5e;"></div>
<div class="t " style="top:282.00px;font-size:22.6px;color:#ececec;left:163.60px;transform:translateX(-50%) scaleX(1.04);">C</div>
<div class="r" style="left:188.10px;top:279.00px;width:1.20px;height:25.50px;background:#5e5e5e;"></div>
<div class="t " style="top:282.00px;font-size:22.6px;color:#ececec;left:258.00px;transform:translateX(-50%) scaleX(1.04);">D</div>
<div class="r" style="left:326.70px;top:279.00px;width:1.20px;height:25.50px;background:#5e5e5e;"></div>
<div class="t " style="top:282.00px;font-size:22.6px;color:#ececec;left:463.30px;transform:translateX(-50%) scaleX(1.04);">E</div>
<div class="r" style="left:598.70px;top:279.00px;width:1.20px;height:25.50px;background:#5e5e5e;"></div>
<div class="t " style="top:282.00px;font-size:22.6px;color:#ececec;left:701.35px;transform:translateX(-50%) scaleX(1.04);">F</div>
<div class="r" style="left:802.80px;top:279.00px;width:1.20px;height:25.50px;background:#5e5e5e;"></div>
<div class="t " style="top:282.00px;font-size:22.6px;color:#ececec;left:905.40px;transform:translateX(-50%) scaleX(1.04);">G</div>
<div class="r" style="left:1006.80px;top:279.00px;width:1.20px;height:25.50px;background:#5e5e5e;"></div>
<div class="t " style="top:282.00px;font-size:22.6px;color:#ececec;left:1110.90px;transform:translateX(-50%) scaleX(1.04);">H</div>
<div class="r" style="left:1213.80px;top:279.00px;width:1.20px;height:25.50px;background:#5e5e5e;"></div>
<div class="t " style="top:282.00px;font-size:22.6px;color:#ececec;left:1317.90px;transform:translateX(-50%) scaleX(1.04);">I</div>
<div class="r" style="left:1420.80px;top:279.00px;width:1.20px;height:25.50px;background:#5e5e5e;"></div>
<div class="t " style="top:282.00px;font-size:22.6px;color:#ececec;left:1505.90px;transform:translateX(-50%) scaleX(1.04);">J</div>
<div class="r" style="left:1589.80px;top:279.00px;width:1.20px;height:25.50px;background:#5e5e5e;"></div>
<div class="t " style="top:282.00px;font-size:22.6px;color:#ececec;left:1674.90px;transform:translateX(-50%) scaleX(1.04);">K</div>
<div class="r" style="left:1758.80px;top:279.00px;width:1.20px;height:25.50px;background:#5e5e5e;"></div>
<div class="t " style="top:282.00px;font-size:22.6px;color:#ececec;left:1843.90px;transform:translateX(-50%) scaleX(1.04);">L</div>
<div class="r" style="left:1927.80px;top:279.00px;width:1.20px;height:25.50px;background:#5e5e5e;"></div>
<div class="t " style="top:282.00px;font-size:22.6px;color:#ececec;left:2012.90px;transform:translateX(-50%) scaleX(1.04);">M</div>
<div class="r" style="left:2096.80px;top:279.00px;width:1.20px;height:25.50px;background:#5e5e5e;"></div>
<div class="t " style="top:282.00px;font-size:22.6px;color:#ececec;left:2181.90px;transform:translateX(-50%) scaleX(1.04);">N</div>
<div class="r" style="left:2265.80px;top:279.00px;width:1.20px;height:25.50px;background:#5e5e5e;"></div>
<div class="t " style="top:282.00px;font-size:22.6px;color:#ececec;left:2350.90px;transform:translateX(-50%) scaleX(1.04);">O</div>
<div class="r" style="left:2434.80px;top:279.00px;width:1.20px;height:25.50px;background:#5e5e5e;"></div>
<div class="t " style="top:282.00px;font-size:22.6px;color:#ececec;left:2519.90px;transform:translateX(-50%) scaleX(1.04);">P</div>
<div class="r" style="left:2603.80px;top:279.00px;width:1.20px;height:25.50px;background:#5e5e5e;"></div>
<div class="t " style="top:282.00px;font-size:22.6px;color:#ececec;left:2688.90px;transform:translateX(-50%) scaleX(1.04);">Q</div>
<div class="r" style="left:2772.80px;top:279.00px;width:1.20px;height:25.50px;background:#5e5e5e;"></div>
<div class="r" style="left:2773.4px;top:278.0px;width:86.59999999999991px;height:27px;overflow:hidden"><div class="t" style="left:76.8px;top:4.00px;font-size:22.6px;color:#ececec">R</div></div>
<div class="r" style="left:2941.80px;top:279.00px;width:1.20px;height:25.50px;background:#5e5e5e;"></div>
<svg class="r" style="left:29.00px;top:282.00px;" width="22" height="21" viewBox="0 0 22 21"><path d="M1.3 19.8 H21 V1.6 Z" fill="#5c5c5c"/></svg>
<div class="r" style="left:11.00px;top:305.00px;width:42.00px;height:1365.00px;background:#0a0a0a;"></div>
<div class="r" style="left:11.30px;top:305.20px;width:41.00px;height:49.30px;background:#666666;"></div>
<div class="r" style="left:11.30px;top:304.60px;width:41.00px;height:1.00px;background:#b8b8b8;"></div>
<div class="r" style="left:11.30px;top:354.20px;width:41.00px;height:1.10px;background:#b8b8b8;"></div>
<div class="t " style="top:332.00px;font-size:21.8px;color:#fff;left:32.00px;transform:translateX(-50%) scaleX(1.03);">1</div>
<div class="t " style="top:374.00px;font-size:21.8px;color:#ececec;left:32.00px;transform:translateX(-50%) scaleX(1.03);">2</div>
<div class="r" style="left:11.30px;top:396.40px;width:41.50px;height:1.20px;background:#4a4a4a;"></div>
<div class="t " style="top:402.00px;font-size:21.8px;color:#ececec;left:32.00px;transform:translateX(-50%) scaleX(1.03);">3</div>
<div class="r" style="left:11.30px;top:424.40px;width:41.50px;height:1.20px;background:#4a4a4a;"></div>
<div class="t " style="top:434.00px;font-size:21.8px;color:#ececec;left:32.00px;transform:translateX(-50%) scaleX(1.03);">4</div>
<div class="r" style="left:11.30px;top:456.40px;width:41.50px;height:1.20px;background:#4a4a4a;"></div>
<div class="t " style="top:463.00px;font-size:21.8px;color:#ececec;left:32.00px;transform:translateX(-50%) scaleX(1.03);">6</div>
<div class="r" style="left:11.30px;top:485.40px;width:41.50px;height:1.20px;background:#4a4a4a;"></div>
<div class="t " style="top:491.00px;font-size:21.8px;color:#ececec;left:32.00px;transform:translateX(-50%) scaleX(1.03);">7</div>
<div class="r" style="left:11.30px;top:513.40px;width:41.50px;height:1.20px;background:#4a4a4a;"></div>
<div class="t " style="top:519.00px;font-size:21.8px;color:#ececec;left:32.00px;transform:translateX(-50%) scaleX(1.03);">13</div>
<div class="r" style="left:11.30px;top:541.90px;width:41.50px;height:1.20px;background:#4a4a4a;"></div>
<div class="t " style="top:568.00px;font-size:21.8px;color:#ececec;left:32.00px;transform:translateX(-50%) scaleX(1.03);">14</div>
<div class="r" style="left:11.30px;top:590.80px;width:41.50px;height:1.20px;background:#4a4a4a;"></div>
<div class="t " style="top:593.00px;font-size:21.8px;color:#ececec;left:32.00px;transform:translateX(-50%) scaleX(1.03);">15</div>
<div class="r" style="left:11.30px;top:615.80px;width:41.50px;height:1.20px;background:#4a4a4a;"></div>
<div class="t " style="top:628.00px;font-size:21.8px;color:#ececec;left:32.00px;transform:translateX(-50%) scaleX(1.03);">16</div>
<div class="r" style="left:11.30px;top:650.70px;width:41.50px;height:1.20px;background:#4a4a4a;"></div>
<div class="t " style="top:657.00px;font-size:21.8px;color:#ececec;left:32.00px;transform:translateX(-50%) scaleX(1.03);">17</div>
<div class="r" style="left:11.30px;top:679.70px;width:41.50px;height:1.20px;background:#4a4a4a;"></div>
<div class="t " style="top:685.00px;font-size:21.8px;color:#ececec;left:32.00px;transform:translateX(-50%) scaleX(1.03);">18</div>
<div class="r" style="left:11.30px;top:707.70px;width:41.50px;height:1.20px;background:#4a4a4a;"></div>
<div class="t " style="top:713.00px;font-size:21.8px;color:#ececec;left:32.00px;transform:translateX(-50%) scaleX(1.03);">19</div>
<div class="r" style="left:11.30px;top:735.70px;width:41.50px;height:1.20px;background:#4a4a4a;"></div>
<div class="t " style="top:741.00px;font-size:21.8px;color:#ececec;left:32.00px;transform:translateX(-50%) scaleX(1.03);">20</div>
<div class="r" style="left:11.30px;top:763.70px;width:41.50px;height:1.20px;background:#4a4a4a;"></div>
<div class="t " style="top:769.00px;font-size:21.8px;color:#ececec;left:32.00px;transform:translateX(-50%) scaleX(1.03);">21</div>
<div class="r" style="left:11.30px;top:791.70px;width:41.50px;height:1.20px;background:#4a4a4a;"></div>
<div class="t " style="top:797.00px;font-size:21.8px;color:#ececec;left:32.00px;transform:translateX(-50%) scaleX(1.03);">22</div>
<div class="r" style="left:11.30px;top:819.70px;width:41.50px;height:1.20px;background:#4a4a4a;"></div>
<div class="t " style="top:825.00px;font-size:21.8px;color:#ececec;left:32.00px;transform:translateX(-50%) scaleX(1.03);">23</div>
<div class="r" style="left:11.30px;top:847.70px;width:41.50px;height:1.20px;background:#4a4a4a;"></div>
<div class="t " style="top:853.00px;font-size:21.8px;color:#ececec;left:32.00px;transform:translateX(-50%) scaleX(1.03);">24</div>
<div class="r" style="left:11.30px;top:875.70px;width:41.50px;height:1.20px;background:#4a4a4a;"></div>
<div class="t " style="top:881.00px;font-size:21.8px;color:#ececec;left:32.00px;transform:translateX(-50%) scaleX(1.03);">25</div>
<div class="r" style="left:11.30px;top:903.70px;width:41.50px;height:1.20px;background:#4a4a4a;"></div>
<div class="t " style="top:909.00px;font-size:21.8px;color:#ececec;left:32.00px;transform:translateX(-50%) scaleX(1.03);">26</div>
<div class="r" style="left:11.30px;top:931.70px;width:41.50px;height:1.20px;background:#4a4a4a;"></div>
<div class="t " style="top:937.00px;font-size:21.8px;color:#ececec;left:32.00px;transform:translateX(-50%) scaleX(1.03);">27</div>
<div class="r" style="left:11.30px;top:959.70px;width:41.50px;height:1.20px;background:#4a4a4a;"></div>
<div class="t " style="top:965.00px;font-size:21.8px;color:#ececec;left:32.00px;transform:translateX(-50%) scaleX(1.03);">28</div>
<div class="r" style="left:11.30px;top:987.70px;width:41.50px;height:1.20px;background:#4a4a4a;"></div>
<div class="t " style="top:993.00px;font-size:21.8px;color:#ececec;left:32.00px;transform:translateX(-50%) scaleX(1.03);">29</div>
<div class="r" style="left:11.30px;top:1015.70px;width:41.50px;height:1.20px;background:#4a4a4a;"></div>
<div class="t " style="top:1021.00px;font-size:21.8px;color:#ececec;left:32.00px;transform:translateX(-50%) scaleX(1.03);">30</div>
<div class="r" style="left:11.30px;top:1043.70px;width:41.50px;height:1.20px;background:#4a4a4a;"></div>
<div class="t " style="top:1049.00px;font-size:21.8px;color:#ececec;left:32.00px;transform:translateX(-50%) scaleX(1.03);">31</div>
<div class="r" style="left:11.30px;top:1071.70px;width:41.50px;height:1.20px;background:#4a4a4a;"></div>
<div class="t " style="top:1077.00px;font-size:21.8px;color:#ececec;left:32.00px;transform:translateX(-50%) scaleX(1.03);">32</div>
<div class="r" style="left:11.30px;top:1099.70px;width:41.50px;height:1.20px;background:#4a4a4a;"></div>
<div class="t " style="top:1105.00px;font-size:21.8px;color:#ececec;left:32.00px;transform:translateX(-50%) scaleX(1.03);">33</div>
<div class="r" style="left:11.30px;top:1127.70px;width:41.50px;height:1.20px;background:#4a4a4a;"></div>
<div class="t " style="top:1133.00px;font-size:21.8px;color:#ececec;left:32.00px;transform:translateX(-50%) scaleX(1.03);">34</div>
<div class="r" style="left:11.30px;top:1155.70px;width:41.50px;height:1.20px;background:#4a4a4a;"></div>
<div class="t " style="top:1161.00px;font-size:21.8px;color:#ececec;left:32.00px;transform:translateX(-50%) scaleX(1.03);">35</div>
<div class="r" style="left:11.30px;top:1183.70px;width:41.50px;height:1.20px;background:#4a4a4a;"></div>
<div class="t " style="top:1189.00px;font-size:21.8px;color:#ececec;left:32.00px;transform:translateX(-50%) scaleX(1.03);">36</div>
<div class="r" style="left:11.30px;top:1211.70px;width:41.50px;height:1.20px;background:#4a4a4a;"></div>
<div class="t " style="top:1224.00px;font-size:21.8px;color:#ececec;left:32.00px;transform:translateX(-50%) scaleX(1.03);">37</div>
<div class="r" style="left:11.30px;top:1247.00px;width:41.50px;height:1.20px;background:#4a4a4a;"></div>
<div class="t " style="top:1252.00px;font-size:21.8px;color:#ececec;left:32.00px;transform:translateX(-50%) scaleX(1.03);">38</div>
<div class="r" style="left:11.30px;top:1274.50px;width:41.50px;height:1.20px;background:#4a4a4a;"></div>
<div class="t " style="top:1280.00px;font-size:21.8px;color:#ececec;left:32.00px;transform:translateX(-50%) scaleX(1.03);">39</div>
<div class="r" style="left:11.30px;top:1302.60px;width:41.50px;height:1.20px;background:#4a4a4a;"></div>
<div class="t " style="top:1322.00px;font-size:21.8px;color:#ececec;left:32.00px;transform:translateX(-50%) scaleX(1.03);">40</div>
<div class="r" style="left:11.30px;top:1344.60px;width:41.50px;height:1.20px;background:#4a4a4a;"></div>
<div class="t " style="top:1350.00px;font-size:21.8px;color:#ececec;left:32.00px;transform:translateX(-50%) scaleX(1.03);">41</div>
<div class="r" style="left:11.30px;top:1372.70px;width:41.50px;height:1.20px;background:#4a4a4a;"></div>
<div class="t " style="top:1378.00px;font-size:21.8px;color:#ececec;left:32.00px;transform:translateX(-50%) scaleX(1.03);">42</div>
<div class="r" style="left:11.30px;top:1400.70px;width:41.50px;height:1.20px;background:#4a4a4a;"></div>
<div class="t " style="top:1406.00px;font-size:21.8px;color:#ececec;left:32.00px;transform:translateX(-50%) scaleX(1.03);">43</div>
<div class="r" style="left:11.30px;top:1428.80px;width:41.50px;height:1.20px;background:#4a4a4a;"></div>
<div class="t " style="top:1434.00px;font-size:21.8px;color:#ececec;left:32.00px;transform:translateX(-50%) scaleX(1.03);">44</div>
<div class="r" style="left:11.30px;top:1456.90px;width:41.50px;height:1.20px;background:#4a4a4a;"></div>
<div class="t " style="top:1462.00px;font-size:21.8px;color:#ececec;left:32.00px;transform:translateX(-50%) scaleX(1.03);">45</div>
<div class="r" style="left:11.30px;top:1485.00px;width:41.50px;height:1.20px;background:#4a4a4a;"></div>
<div class="t " style="top:1504.00px;font-size:21.8px;color:#ececec;left:32.00px;transform:translateX(-50%) scaleX(1.03);">46</div>
<div class="r" style="left:11.30px;top:1526.40px;width:41.50px;height:1.20px;background:#4a4a4a;"></div>
<div class="t " style="top:1532.00px;font-size:21.8px;color:#ececec;left:32.00px;transform:translateX(-50%) scaleX(1.03);">47</div>
<div class="r" style="left:11.30px;top:1554.40px;width:41.50px;height:1.20px;background:#4a4a4a;"></div>
<div class="t " style="top:1560.00px;font-size:21.8px;color:#ececec;left:32.00px;transform:translateX(-50%) scaleX(1.03);">48</div>
<div class="r" style="left:11.30px;top:1582.90px;width:41.50px;height:1.20px;background:#4a4a4a;"></div>
<div class="t " style="top:1588.00px;font-size:21.8px;color:#ececec;left:32.00px;transform:translateX(-50%) scaleX(1.03);">49</div>
<div class="r" style="left:11.30px;top:1610.90px;width:41.50px;height:1.20px;background:#4a4a4a;"></div>
<div class="t " style="top:1630.00px;font-size:21.8px;color:#ececec;left:32.00px;transform:translateX(-50%) scaleX(1.03);">50</div>
<div class="r" style="left:11.30px;top:1652.40px;width:41.50px;height:1.20px;background:#4a4a4a;"></div>
<div class="r" style="left:11.30px;top:459.30px;width:41.50px;height:1.20px;background:#4a4a4a;"></div>
<div class="r" style="left:11.30px;top:515.60px;width:41.50px;height:1.20px;background:#777;"></div>
<div class="r" style="left:11.30px;top:513.20px;width:41.50px;height:1.40px;background:#9a9a9a;"></div>
<div class="r" style="left:52.00px;top:304.20px;width:1.90px;height:51.20px;background:#1f7a45;"></div>
<div class="r" style="left:52.00px;top:304.00px;width:38.00px;height:1.70px;background:#1f7a45;"></div>
<div class="t " style="top:313.00px;font-size:37px;color:#242424;font-weight:700;-webkit-text-stroke:0.55px #242424;left:95.51px;transform:scaleX(1.0921);transform-origin:0 50%;">Startup Costs (CAPEX)</div>
<div class="t " style="top:361.00px;font-size:33.2px;color:#000;font-weight:700;-webkit-text-stroke:0.55px #000;left:94.14px;transform:scaleX(1.0596);transform-origin:0 50%;">ABC Company Inc.</div>
<div class="t " style="top:400.00px;font-size:22.2px;color:#2f72ea;font-weight:700;-webkit-text-stroke:0.55px #2f72ea;left:92.36px;transform:scaleX(1.0387);transform-origin:0 50%;">Go to Table of Contents</div>
<div class="r" style="left:93.20px;top:421.40px;width:258.00px;height:1.70px;background:#2f72ea;"></div>
<div class="t " style="top:463.00px;font-size:22.2px;color:#000;font-weight:700;-webkit-text-stroke:0.55px #000;left:92.85px;transform:scaleX(1.0354);transform-origin:0 50%;">Fiscal Year</div>
<div class="t " style="top:491.00px;font-size:22.2px;color:#000;font-weight:700;-webkit-text-stroke:0.55px #000;left:92.78px;transform:scaleX(1.0792);transform-origin:0 50%;">Month</div>
<div class="t " style="top:551.00px;font-size:37px;color:#242424;font-weight:700;-webkit-text-stroke:0.55px #242424;left:95.50px;transform:scaleX(1.0983);transform-origin:0 50%;">Startup Costs, $</div>
<div class="t " style="top:1309.00px;font-size:37px;color:#242424;font-weight:700;-webkit-text-stroke:0.55px #242424;left:95.49px;transform:scaleX(1.1082);transform-origin:0 50%;">Startup Costs Depreciation, $</div>
<div class="t " style="top:463.00px;font-size:22.2px;color:#000;font-weight:700;-webkit-text-stroke:0.55px #000;right:1484.78px;transform:scaleX(1.1375);transform-origin:100% 50%;">2025</div>
<div class="t " style="top:491.00px;font-size:22.2px;color:#000;font-weight:700;-webkit-text-stroke:0.55px #000;right:1484.89px;transform:scaleX(1.0968);transform-origin:100% 50%;">Dec-25</div>
<div class="t " style="top:463.00px;font-size:22.2px;color:#000;font-weight:700;-webkit-text-stroke:0.55px #000;right:1315.49px;transform:scaleX(1.1435);transform-origin:100% 50%;">2026</div>
<div class="t " style="top:491.00px;font-size:22.2px;color:#000;font-weight:700;-webkit-text-stroke:0.55px #000;right:1315.59px;transform:scaleX(1.083);transform-origin:100% 50%;">Jan-26</div>
<div class="t " style="top:463.00px;font-size:22.2px;color:#000;font-weight:700;-webkit-text-stroke:0.55px #000;right:1146.49px;transform:scaleX(1.1435);transform-origin:100% 50%;">2026</div>
<div class="t " style="top:491.00px;font-size:22.2px;color:#000;font-weight:700;-webkit-text-stroke:0.55px #000;right:1146.62px;transform:scaleX(1.0975);transform-origin:100% 50%;">Feb-26</div>
<div class="t " style="top:463.00px;font-size:22.2px;color:#000;font-weight:700;-webkit-text-stroke:0.55px #000;right:977.49px;transform:scaleX(1.1435);transform-origin:100% 50%;">2026</div>
<div class="t " style="top:491.00px;font-size:22.2px;color:#000;font-weight:700;-webkit-text-stroke:0.55px #000;right:977.58px;transform:scaleX(1.1379);transform-origin:100% 50%;">Mar-26</div>
<div class="t " style="top:463.00px;font-size:22.2px;color:#000;font-weight:700;-webkit-text-stroke:0.55px #000;right:808.49px;transform:scaleX(1.1435);transform-origin:100% 50%;">2026</div>
<div class="t " style="top:491.00px;font-size:22.2px;color:#000;font-weight:700;-webkit-text-stroke:0.55px #000;right:808.61px;transform:scaleX(1.0913);transform-origin:100% 50%;">Apr-26</div>
<div class="t " style="top:463.00px;font-size:22.2px;color:#000;font-weight:700;-webkit-text-stroke:0.55px #000;right:639.49px;transform:scaleX(1.1435);transform-origin:100% 50%;">2026</div>
<div class="t " style="top:491.00px;font-size:22.2px;color:#000;font-weight:700;-webkit-text-stroke:0.55px #000;right:639.64px;transform:scaleX(1.1205);transform-origin:100% 50%;">May-26</div>
<div class="t " style="top:463.00px;font-size:22.2px;color:#000;font-weight:700;-webkit-text-stroke:0.55px #000;right:470.49px;transform:scaleX(1.1435);transform-origin:100% 50%;">2026</div>
<div class="t " style="top:491.00px;font-size:22.2px;color:#000;font-weight:700;-webkit-text-stroke:0.55px #000;right:470.64px;transform:scaleX(1.0752);transform-origin:100% 50%;">Jun-26</div>
<div class="t " style="top:463.00px;font-size:22.2px;color:#000;font-weight:700;-webkit-text-stroke:0.55px #000;right:301.49px;transform:scaleX(1.1435);transform-origin:100% 50%;">2026</div>
<div class="t " style="top:491.00px;font-size:22.2px;color:#000;font-weight:700;-webkit-text-stroke:0.55px #000;right:301.50px;transform:scaleX(1.0952);transform-origin:100% 50%;">Jul-26</div>
<div class="t " style="top:463.00px;font-size:22.2px;color:#000;font-weight:700;-webkit-text-stroke:0.55px #000;right:132.49px;transform:scaleX(1.1435);transform-origin:100% 50%;">2026</div>
<div class="t " style="top:491.00px;font-size:22.2px;color:#000;font-weight:700;-webkit-text-stroke:0.55px #000;right:132.71px;transform:scaleX(1.0703);transform-origin:100% 50%;">Aug-26</div>
<div class="r" style="left:53.00px;top:513.90px;width:2807.00px;height:1.10px;background:#9b9b9b;"></div>
<div class="r" style="left:139.10px;top:616.90px;width:459.60px;height:32.90px;background:#6d76e6;"></div>
<div class="t " style="top:623.00px;font-size:22.2px;color:#fff;font-weight:700;-webkit-text-stroke:0.55px #fff;left:308.60px;transform:scaleX(1.051);transform-origin:0 50%;">Categories</div>
<div class="r" style="left:140.10px;top:653.00px;width:457.60px;height:559.00px;background:#fef069;"></div>
<div class="r" style="left:600.00px;top:616.90px;width:202.80px;height:32.90px;background:#6d76e6;"></div>
<div class="t " style="top:623.00px;font-size:22.2px;color:#fff;font-weight:700;-webkit-text-stroke:0.55px #fff;left:632.27px;transform:scaleX(1.0506);transform-origin:0 50%;">Launch date</div>
<div class="r" style="left:600.90px;top:653.00px;width:200.90px;height:559.00px;background:#fef069;"></div>
<div class="r" style="left:804.10px;top:616.90px;width:202.70px;height:32.90px;background:#6d76e6;"></div>
<div class="t " style="top:623.00px;font-size:22.2px;color:#fff;font-weight:700;-webkit-text-stroke:0.55px #fff;left:855.31px;transform:scaleX(1.0601);transform-origin:0 50%;">End date</div>
<div class="r" style="left:805.00px;top:653.00px;width:200.80px;height:559.00px;background:#fef069;"></div>
<div class="r" style="left:1008.10px;top:616.90px;width:205.70px;height:32.90px;background:#6d76e6;"></div>
<div class="t " style="top:623.00px;font-size:22.2px;color:#fff;font-weight:700;-webkit-text-stroke:0.55px #fff;left:1044.61px;transform:scaleX(1.0501);transform-origin:0 50%;">Spending, $</div>
<div class="r" style="left:1009.00px;top:653.00px;width:203.80px;height:559.00px;background:#fef069;"></div>
<div class="r" style="left:1215.10px;top:616.90px;width:206.00px;height:32.90px;background:#6d76e6;"></div>
<div class="t " style="top:623.00px;font-size:22.2px;color:#fff;font-weight:700;-webkit-text-stroke:0.55px #fff;left:1243.57px;transform:scaleX(1.0638);transform-origin:0 50%;">Amortizable?</div>
<div class="r" style="left:1216.00px;top:653.00px;width:204.30px;height:559.00px;background:#fef069;"></div>
<div class="r" style="left:140.10px;top:680.30px;width:1280.20px;height:1.25px;background:#fffbb8;"></div>
<div class="r" style="left:140.10px;top:708.30px;width:1280.20px;height:1.25px;background:#fffbb8;"></div>
<div class="r" style="left:140.10px;top:736.30px;width:1280.20px;height:1.25px;background:#fffbb8;"></div>
<div class="r" style="left:140.10px;top:764.30px;width:1280.20px;height:1.25px;background:#fffbb8;"></div>
<div class="r" style="left:140.10px;top:792.30px;width:1280.20px;height:1.25px;background:#fffbb8;"></div>
<div class="r" style="left:140.10px;top:820.30px;width:1280.20px;height:1.25px;background:#fffbb8;"></div>
<div class="r" style="left:140.10px;top:848.30px;width:1280.20px;height:1.25px;background:#fffbb8;"></div>
<div class="r" style="left:140.10px;top:876.30px;width:1280.20px;height:1.25px;background:#fffbb8;"></div>
<div class="r" style="left:140.10px;top:904.30px;width:1280.20px;height:1.25px;background:#fffbb8;"></div>
<div class="r" style="left:140.10px;top:932.30px;width:1280.20px;height:1.25px;background:#fffbb8;"></div>
<div class="r" style="left:140.10px;top:960.30px;width:1280.20px;height:1.25px;background:#fffbb8;"></div>
<div class="r" style="left:140.10px;top:988.30px;width:1280.20px;height:1.25px;background:#fffbb8;"></div>
<div class="r" style="left:140.10px;top:1016.30px;width:1280.20px;height:1.25px;background:#fffbb8;"></div>
<div class="r" style="left:140.10px;top:1044.30px;width:1280.20px;height:1.25px;background:#fffbb8;"></div>
<div class="r" style="left:140.10px;top:1072.30px;width:1280.20px;height:1.25px;background:#fffbb8;"></div>
<div class="r" style="left:140.10px;top:1100.30px;width:1280.20px;height:1.25px;background:#fffbb8;"></div>
<div class="r" style="left:140.10px;top:1128.30px;width:1280.20px;height:1.25px;background:#fffbb8;"></div>
<div class="r" style="left:140.10px;top:1156.30px;width:1280.20px;height:1.25px;background:#fffbb8;"></div>
<div class="r" style="left:140.10px;top:1184.30px;width:1280.20px;height:1.25px;background:#fffbb8;"></div>
<div class="r" style="left:597.80px;top:652.00px;width:3.10px;height:560.00px;background:#fff;"></div>
<div class="r" style="left:801.90px;top:652.00px;width:3.10px;height:560.00px;background:#fff;"></div>
<div class="r" style="left:1005.90px;top:652.00px;width:3.10px;height:560.00px;background:#fff;"></div>
<div class="r" style="left:1212.90px;top:652.00px;width:3.10px;height:560.00px;background:#fff;"></div>
<div class="t " style="top:656.00px;font-size:21.8px;color:#101010;left:141.59px;transform:scaleX(1.0075);transform-origin:0 50%;">Office Furniture &amp; Equipment</div>
<div class="t " style="top:656.00px;font-size:21.8px;color:#101010;left:668.50px;transform:scaleX(0.9954);transform-origin:0 50%;">Jan-26</div>
<div class="t " style="top:656.00px;font-size:21.8px;color:#101010;left:869.29px;transform:scaleX(1.0355);transform-origin:0 50%;">Mar-26</div>
<div class="t " style="top:656.00px;font-size:21.8px;color:#101010;right:1698.77px;transform:scaleX(1.0125);transform-origin:100% 50%;">15,000</div>
<div class="t " style="top:656.00px;font-size:21.8px;color:#101010;left:1299.99px;transform:scaleX(1.0161);transform-origin:0 50%;">Yes</div>
<div class="t " style="top:656.00px;font-size:21.8px;color:#101010;right:1322.90px;transform:scaleX(1.0009);transform-origin:100% 50%;">5,000</div>
<div class="t " style="top:656.00px;font-size:21.8px;color:#101010;right:1153.90px;transform:scaleX(1.0009);transform-origin:100% 50%;">5,000</div>
<div class="t " style="top:656.00px;font-size:21.8px;color:#101010;right:984.90px;transform:scaleX(1.0009);transform-origin:100% 50%;">5,000</div>
<div class="r" style="left:2055.10px;top:665.80px;width:6.10px;height:2.20px;background:#101010;"></div>
<div class="r" style="left:2224.10px;top:665.80px;width:6.10px;height:2.20px;background:#101010;"></div>
<div class="r" style="left:2393.10px;top:665.80px;width:6.10px;height:2.20px;background:#101010;"></div>
<div class="r" style="left:2562.10px;top:665.80px;width:6.10px;height:2.20px;background:#101010;"></div>
<div class="r" style="left:2731.10px;top:665.80px;width:6.10px;height:2.20px;background:#101010;"></div>
<div class="t " style="top:685.00px;font-size:21.8px;color:#101010;left:141.59px;transform:scaleX(1.0098);transform-origin:0 50%;">Computer Hardware &amp; Software</div>
<div class="t " style="top:685.00px;font-size:21.8px;color:#101010;left:668.50px;transform:scaleX(0.9954);transform-origin:0 50%;">Jan-26</div>
<div class="t " style="top:685.00px;font-size:21.8px;color:#101010;left:869.29px;transform:scaleX(1.0355);transform-origin:0 50%;">Mar-26</div>
<div class="t " style="top:685.00px;font-size:21.8px;color:#101010;right:1698.90px;transform:scaleX(1.0009);transform-origin:100% 50%;">8,000</div>
<div class="t " style="top:685.00px;font-size:21.8px;color:#101010;left:1299.99px;transform:scaleX(1.0161);transform-origin:0 50%;">Yes</div>
<div class="t " style="top:685.00px;font-size:21.8px;color:#101010;right:1322.65px;transform:scaleX(1.0057);transform-origin:100% 50%;">2,667</div>
<div class="t " style="top:685.00px;font-size:21.8px;color:#101010;right:1153.65px;transform:scaleX(1.0057);transform-origin:100% 50%;">2,667</div>
<div class="t " style="top:685.00px;font-size:21.8px;color:#101010;right:984.65px;transform:scaleX(1.0057);transform-origin:100% 50%;">2,667</div>
<div class="r" style="left:2055.10px;top:694.80px;width:6.10px;height:2.20px;background:#101010;"></div>
<div class="r" style="left:2224.10px;top:694.80px;width:6.10px;height:2.20px;background:#101010;"></div>
<div class="r" style="left:2393.10px;top:694.80px;width:6.10px;height:2.20px;background:#101010;"></div>
<div class="r" style="left:2562.10px;top:694.80px;width:6.10px;height:2.20px;background:#101010;"></div>
<div class="r" style="left:2731.10px;top:694.80px;width:6.10px;height:2.20px;background:#101010;"></div>
<div class="t " style="top:713.00px;font-size:21.8px;color:#101010;left:142.60px;transform:scaleX(1.0025);transform-origin:0 50%;">Website &amp; Branding Development</div>
<div class="t " style="top:713.00px;font-size:21.8px;color:#101010;left:666.29px;transform:scaleX(1.0053);transform-origin:0 50%;">Feb-26</div>
<div class="t " style="top:713.00px;font-size:21.8px;color:#101010;left:872.90px;transform:scaleX(1.0078);transform-origin:0 50%;">Apr-26</div>
<div class="t " style="top:713.00px;font-size:21.8px;color:#101010;right:1698.77px;transform:scaleX(1.0125);transform-origin:100% 50%;">10,000</div>
<div class="t " style="top:713.00px;font-size:21.8px;color:#101010;left:1299.99px;transform:scaleX(1.0161);transform-origin:0 50%;">Yes</div>
<div class="r" style="left:1548.10px;top:722.80px;width:6.10px;height:2.20px;background:#101010;"></div>
<div class="t " style="top:713.00px;font-size:21.8px;color:#101010;right:1153.65px;transform:scaleX(1.0009);transform-origin:100% 50%;">3,333</div>
<div class="t " style="top:713.00px;font-size:21.8px;color:#101010;right:984.65px;transform:scaleX(1.0009);transform-origin:100% 50%;">3,333</div>
<div class="t " style="top:713.00px;font-size:21.8px;color:#101010;right:815.65px;transform:scaleX(1.0009);transform-origin:100% 50%;">3,333</div>
<div class="r" style="left:2224.10px;top:722.80px;width:6.10px;height:2.20px;background:#101010;"></div>
<div class="r" style="left:2393.10px;top:722.80px;width:6.10px;height:2.20px;background:#101010;"></div>
<div class="r" style="left:2562.10px;top:722.80px;width:6.10px;height:2.20px;background:#101010;"></div>
<div class="r" style="left:2731.10px;top:722.80px;width:6.10px;height:2.20px;background:#101010;"></div>
<div class="t " style="top:741.00px;font-size:21.8px;color:#101010;left:141.60px;">Office Lease Security Deposit</div>
<div class="t " style="top:741.00px;font-size:21.8px;color:#101010;left:668.50px;transform:scaleX(0.9954);transform-origin:0 50%;">Jan-26</div>
<div class="t " style="top:741.00px;font-size:21.8px;color:#101010;left:872.55px;transform:scaleX(0.9954);transform-origin:0 50%;">Jan-26</div>
<div class="t " style="top:741.00px;font-size:21.8px;color:#101010;right:1698.90px;transform:scaleX(1.0009);transform-origin:100% 50%;">8,000</div>
<div class="t " style="top:741.00px;font-size:21.8px;color:#101010;left:1299.99px;transform:scaleX(1.0161);transform-origin:0 50%;">Yes</div>
<div class="t " style="top:741.00px;font-size:21.8px;color:#101010;right:1322.90px;transform:scaleX(1.0009);transform-origin:100% 50%;">8,000</div>
<div class="r" style="left:1717.10px;top:750.80px;width:6.10px;height:2.20px;background:#101010;"></div>
<div class="r" style="left:1886.10px;top:750.80px;width:6.10px;height:2.20px;background:#101010;"></div>
<div class="r" style="left:2055.10px;top:750.80px;width:6.10px;height:2.20px;background:#101010;"></div>
<div class="r" style="left:2224.10px;top:750.80px;width:6.10px;height:2.20px;background:#101010;"></div>
<div class="r" style="left:2393.10px;top:750.80px;width:6.10px;height:2.20px;background:#101010;"></div>
<div class="r" style="left:2562.10px;top:750.80px;width:6.10px;height:2.20px;background:#101010;"></div>
<div class="r" style="left:2731.10px;top:750.80px;width:6.10px;height:2.20px;background:#101010;"></div>
<div class="t " style="top:769.00px;font-size:21.8px;color:#101010;left:140.54px;transform:scaleX(1.0313);transform-origin:0 50%;">Initial Marketing Collateral</div>
<div class="t " style="top:769.00px;font-size:21.8px;color:#101010;left:665.24px;transform:scaleX(1.0355);transform-origin:0 50%;">Mar-26</div>
<div class="t " style="top:769.00px;font-size:21.8px;color:#101010;left:867.91px;transform:scaleX(1.02);transform-origin:0 50%;">May-26</div>
<div class="t " style="top:769.00px;font-size:21.8px;color:#101010;right:1698.91px;transform:scaleX(0.9962);transform-origin:100% 50%;">3,000</div>
<div class="t " style="top:769.00px;font-size:21.8px;color:#101010;left:1299.99px;transform:scaleX(1.0161);transform-origin:0 50%;">Yes</div>
<div class="r" style="left:1548.10px;top:778.80px;width:6.10px;height:2.20px;background:#101010;"></div>
<div class="r" style="left:1717.10px;top:778.80px;width:6.10px;height:2.20px;background:#101010;"></div>
<div class="t " style="top:769.00px;font-size:21.8px;color:#101010;right:984.89px;transform:scaleX(1.0154);transform-origin:100% 50%;">1,000</div>
<div class="t " style="top:769.00px;font-size:21.8px;color:#101010;right:815.89px;transform:scaleX(1.0154);transform-origin:100% 50%;">1,000</div>
<div class="t " style="top:769.00px;font-size:21.8px;color:#101010;right:646.89px;transform:scaleX(1.0154);transform-origin:100% 50%;">1,000</div>
<div class="r" style="left:2393.10px;top:778.80px;width:6.10px;height:2.20px;background:#101010;"></div>
<div class="r" style="left:2562.10px;top:778.80px;width:6.10px;height:2.20px;background:#101010;"></div>
<div class="r" style="left:2731.10px;top:778.80px;width:6.10px;height:2.20px;background:#101010;"></div>
<div class="r" style="left:143.20px;top:805.80px;width:6.00px;height:2.20px;background:#101010;"></div>
<div class="t " style="top:797.00px;font-size:21.8px;color:#101010;left:1299.99px;transform:scaleX(1.0161);transform-origin:0 50%;">Yes</div>
<div class="r" style="left:1548.10px;top:806.80px;width:6.10px;height:2.20px;background:#101010;"></div>
<div class="r" style="left:1717.10px;top:806.80px;width:6.10px;height:2.20px;background:#101010;"></div>
<div class="r" style="left:1886.10px;top:806.80px;width:6.10px;height:2.20px;background:#101010;"></div>
<div class="r" style="left:2055.10px;top:806.80px;width:6.10px;height:2.20px;background:#101010;"></div>
<div class="r" style="left:2224.10px;top:806.80px;width:6.10px;height:2.20px;background:#101010;"></div>
<div class="r" style="left:2393.10px;top:806.80px;width:6.10px;height:2.20px;background:#101010;"></div>
<div class="r" style="left:2562.10px;top:806.80px;width:6.10px;height:2.20px;background:#101010;"></div>
<div class="r" style="left:2731.10px;top:806.80px;width:6.10px;height:2.20px;background:#101010;"></div>
<div class="r" style="left:143.20px;top:833.80px;width:6.00px;height:2.20px;background:#101010;"></div>
<div class="t " style="top:825.00px;font-size:21.8px;color:#101010;left:1299.99px;transform:scaleX(1.0161);transform-origin:0 50%;">Yes</div>
<div class="r" style="left:1548.10px;top:834.80px;width:6.10px;height:2.20px;background:#101010;"></div>
<div class="r" style="left:1717.10px;top:834.80px;width:6.10px;height:2.20px;background:#101010;"></div>
<div class="r" style="left:1886.10px;top:834.80px;width:6.10px;height:2.20px;background:#101010;"></div>
<div class="r" style="left:2055.10px;top:834.80px;width:6.10px;height:2.20px;background:#101010;"></div>
<div class="r" style="left:2224.10px;top:834.80px;width:6.10px;height:2.20px;background:#101010;"></div>
<div class="r" style="left:2393.10px;top:834.80px;width:6.10px;height:2.20px;background:#101010;"></div>
<div class="r" style="left:2562.10px;top:834.80px;width:6.10px;height:2.20px;background:#101010;"></div>
<div class="r" style="left:2731.10px;top:834.80px;width:6.10px;height:2.20px;background:#101010;"></div>
<div class="r" style="left:143.20px;top:861.80px;width:6.00px;height:2.20px;background:#101010;"></div>
<div class="t " style="top:853.00px;font-size:21.8px;color:#101010;left:1299.99px;transform:scaleX(1.0161);transform-origin:0 50%;">Yes</div>
<div class="r" style="left:1548.10px;top:862.80px;width:6.10px;height:2.20px;background:#101010;"></div>
<div class="r" style="left:1717.10px;top:862.80px;width:6.10px;height:2.20px;background:#101010;"></div>
<div class="r" style="left:1886.10px;top:862.80px;width:6.10px;height:2.20px;background:#101010;"></div>
<div class="r" style="left:2055.10px;top:862.80px;width:6.10px;height:2.20px;background:#101010;"></div>
<div class="r" style="left:2224.10px;top:862.80px;width:6.10px;height:2.20px;background:#101010;"></div>
<div class="r" style="left:2393.10px;top:862.80px;width:6.10px;height:2.20px;background:#101010;"></div>
<div class="r" style="left:2562.10px;top:862.80px;width:6.10px;height:2.20px;background:#101010;"></div>
<div class="r" style="left:2731.10px;top:862.80px;width:6.10px;height:2.20px;background:#101010;"></div>
<div class="r" style="left:143.20px;top:889.80px;width:6.00px;height:2.20px;background:#101010;"></div>
<div class="t " style="top:881.00px;font-size:21.8px;color:#101010;left:1299.99px;transform:scaleX(1.0161);transform-origin:0 50%;">Yes</div>
<div class="r" style="left:1548.10px;top:890.80px;width:6.10px;height:2.20px;background:#101010;"></div>
<div class="r" style="left:1717.10px;top:890.80px;width:6.10px;height:2.20px;background:#101010;"></div>
<div class="r" style="left:1886.10px;top:890.80px;width:6.10px;height:2.20px;background:#101010;"></div>
<div class="r" style="left:2055.10px;top:890.80px;width:6.10px;height:2.20px;background:#101010;"></div>
<div class="r" style="left:2224.10px;top:890.80px;width:6.10px;height:2.20px;background:#101010;"></div>
<div class="r" style="left:2393.10px;top:890.80px;width:6.10px;height:2.20px;background:#101010;"></div>
<div class="r" style="left:2562.10px;top:890.80px;width:6.10px;height:2.20px;background:#101010;"></div>
<div class="r" style="left:2731.10px;top:890.80px;width:6.10px;height:2.20px;background:#101010;"></div>
<div class="r" style="left:143.20px;top:917.80px;width:6.00px;height:2.20px;background:#101010;"></div>
<div class="t " style="top:909.00px;font-size:21.8px;color:#101010;left:1299.99px;transform:scaleX(1.0161);transform-origin:0 50%;">Yes</div>
<div class="r" style="left:1548.10px;top:918.80px;width:6.10px;height:2.20px;background:#101010;"></div>
<div class="r" style="left:1717.10px;top:918.80px;width:6.10px;height:2.20px;background:#101010;"></div>
<div class="r" style="left:1886.10px;top:918.80px;width:6.10px;height:2.20px;background:#101010;"></div>
<div class="r" style="left:2055.10px;top:918.80px;width:6.10px;height:2.20px;background:#101010;"></div>
<div class="r" style="left:2224.10px;top:918.80px;width:6.10px;height:2.20px;background:#101010;"></div>
<div class="r" style="left:2393.10px;top:918.80px;width:6.10px;height:2.20px;background:#101010;"></div>
<div class="r" style="left:2562.10px;top:918.80px;width:6.10px;height:2.20px;background:#101010;"></div>
<div class="r" style="left:2731.10px;top:918.80px;width:6.10px;height:2.20px;background:#101010;"></div>
<div class="r" style="left:143.20px;top:945.80px;width:6.00px;height:2.20px;background:#101010;"></div>
<div class="t " style="top:937.00px;font-size:21.8px;color:#101010;left:1299.99px;transform:scaleX(1.0161);transform-origin:0 50%;">Yes</div>
<div class="r" style="left:1548.10px;top:946.80px;width:6.10px;height:2.20px;background:#101010;"></div>
<div class="r" style="left:1717.10px;top:946.80px;width:6.10px;height:2.20px;background:#101010;"></div>
<div class="r" style="left:1886.10px;top:946.80px;width:6.10px;height:2.20px;background:#101010;"></div>
<div class="r" style="left:2055.10px;top:946.80px;width:6.10px;height:2.20px;background:#101010;"></div>
<div class="r" style="left:2224.10px;top:946.80px;width:6.10px;height:2.20px;background:#101010;"></div>
<div class="r" style="left:2393.10px;top:946.80px;width:6.10px;height:2.20px;background:#101010;"></div>
<div class="r" style="left:2562.10px;top:946.80px;width:6.10px;height:2.20px;background:#101010;"></div>
<div class="r" style="left:2731.10px;top:946.80px;width:6.10px;height:2.20px;background:#101010;"></div>
<div class="r" style="left:143.20px;top:973.80px;width:6.00px;height:2.20px;background:#101010;"></div>
<div class="t " style="top:965.00px;font-size:21.8px;color:#101010;left:1299.99px;transform:scaleX(1.0161);transform-origin:0 50%;">Yes</div>
<div class="r" style="left:1548.10px;top:974.80px;width:6.10px;height:2.20px;background:#101010;"></div>
<div class="r" style="left:1717.10px;top:974.80px;width:6.10px;height:2.20px;background:#101010;"></div>
<div class="r" style="left:1886.10px;top:974.80px;width:6.10px;height:2.20px;background:#101010;"></div>
<div class="r" style="left:2055.10px;top:974.80px;width:6.10px;height:2.20px;background:#101010;"></div>
<div class="r" style="left:2224.10px;top:974.80px;width:6.10px;height:2.20px;background:#101010;"></div>
<div class="r" style="left:2393.10px;top:974.80px;width:6.10px;height:2.20px;background:#101010;"></div>
<div class="r" style="left:2562.10px;top:974.80px;width:6.10px;height:2.20px;background:#101010;"></div>
<div class="r" style="left:2731.10px;top:974.80px;width:6.10px;height:2.20px;background:#101010;"></div>
<div class="r" style="left:143.20px;top:1001.80px;width:6.00px;height:2.20px;background:#101010;"></div>
<div class="t " style="top:993.00px;font-size:21.8px;color:#101010;left:1299.99px;transform:scaleX(1.0161);transform-origin:0 50%;">Yes</div>
<div class="r" style="left:1548.10px;top:1002.80px;width:6.10px;height:2.20px;background:#101010;"></div>
<div class="r" style="left:1717.10px;top:1002.80px;width:6.10px;height:2.20px;background:#101010;"></div>
<div class="r" style="left:1886.10px;top:1002.80px;width:6.10px;height:2.20px;background:#101010;"></div>
<div class="r" style="left:2055.10px;top:1002.80px;width:6.10px;height:2.20px;background:#101010;"></div>
<div class="r" style="left:2224.10px;top:1002.80px;width:6.10px;height:2.20px;background:#101010;"></div>
<div class="r" style="left:2393.10px;top:1002.80px;width:6.10px;height:2.20px;background:#101010;"></div>
<div class="r" style="left:2562.10px;top:1002.80px;width:6.10px;height:2.20px;background:#101010;"></div>
<div class="r" style="left:2731.10px;top:1002.80px;width:6.10px;height:2.20px;background:#101010;"></div>
<div class="r" style="left:143.20px;top:1029.80px;width:6.00px;height:2.20px;background:#101010;"></div>
<div class="t " style="top:1021.00px;font-size:21.8px;color:#101010;left:1299.99px;transform:scaleX(1.0161);transform-origin:0 50%;">Yes</div>
<div class="r" style="left:1548.10px;top:1030.80px;width:6.10px;height:2.20px;background:#101010;"></div>
<div class="r" style="left:1717.10px;top:1030.80px;width:6.10px;height:2.20px;background:#101010;"></div>
<div class="r" style="left:1886.10px;top:1030.80px;width:6.10px;height:2.20px;background:#101010;"></div>
<div class="r" style="left:2055.10px;top:1030.80px;width:6.10px;height:2.20px;background:#101010;"></div>
<div class="r" style="left:2224.10px;top:1030.80px;width:6.10px;height:2.20px;background:#101010;"></div>
<div class="r" style="left:2393.10px;top:1030.80px;width:6.10px;height:2.20px;background:#101010;"></div>
<div class="r" style="left:2562.10px;top:1030.80px;width:6.10px;height:2.20px;background:#101010;"></div>
<div class="r" style="left:2731.10px;top:1030.80px;width:6.10px;height:2.20px;background:#101010;"></div>
<div class="r" style="left:143.20px;top:1057.80px;width:6.00px;height:2.20px;background:#101010;"></div>
<div class="t " style="top:1049.00px;font-size:21.8px;color:#101010;left:1299.99px;transform:scaleX(1.0161);transform-origin:0 50%;">Yes</div>
<div class="r" style="left:1548.10px;top:1058.80px;width:6.10px;height:2.20px;background:#101010;"></div>
<div class="r" style="left:1717.10px;top:1058.80px;width:6.10px;height:2.20px;background:#101010;"></div>
<div class="r" style="left:1886.10px;top:1058.80px;width:6.10px;height:2.20px;background:#101010;"></div>
<div class="r" style="left:2055.10px;top:1058.80px;width:6.10px;height:2.20px;background:#101010;"></div>
<div class="r" style="left:2224.10px;top:1058.80px;width:6.10px;height:2.20px;background:#101010;"></div>
<div class="r" style="left:2393.10px;top:1058.80px;width:6.10px;height:2.20px;background:#101010;"></div>
<div class="r" style="left:2562.10px;top:1058.80px;width:6.10px;height:2.20px;background:#101010;"></div>
<div class="r" style="left:2731.10px;top:1058.80px;width:6.10px;height:2.20px;background:#101010;"></div>
<div class="r" style="left:143.20px;top:1085.80px;width:6.00px;height:2.20px;background:#101010;"></div>
<div class="t " style="top:1077.00px;font-size:21.8px;color:#101010;left:1299.99px;transform:scaleX(1.0161);transform-origin:0 50%;">Yes</div>
<div class="r" style="left:1548.10px;top:1086.80px;width:6.10px;height:2.20px;background:#101010;"></div>
<div class="r" style="left:1717.10px;top:1086.80px;width:6.10px;height:2.20px;background:#101010;"></div>
<div class="r" style="left:1886.10px;top:1086.80px;width:6.10px;height:2.20px;background:#101010;"></div>
<div class="r" style="left:2055.10px;top:1086.80px;width:6.10px;height:2.20px;background:#101010;"></div>
<div class="r" style="left:2224.10px;top:1086.80px;width:6.10px;height:2.20px;background:#101010;"></div>
<div class="r" style="left:2393.10px;top:1086.80px;width:6.10px;height:2.20px;background:#101010;"></div>
<div class="r" style="left:2562.10px;top:1086.80px;width:6.10px;height:2.20px;background:#101010;"></div>
<div class="r" style="left:2731.10px;top:1086.80px;width:6.10px;height:2.20px;background:#101010;"></div>
<div class="r" style="left:143.20px;top:1113.80px;width:6.00px;height:2.20px;background:#101010;"></div>
<div class="t " style="top:1105.00px;font-size:21.8px;color:#101010;left:1299.99px;transform:scaleX(1.0161);transform-origin:0 50%;">Yes</div>
<div class="r" style="left:1548.10px;top:1114.80px;width:6.10px;height:2.20px;background:#101010;"></div>
<div class="r" style="left:1717.10px;top:1114.80px;width:6.10px;height:2.20px;background:#101010;"></div>
<div class="r" style="left:1886.10px;top:1114.80px;width:6.10px;height:2.20px;background:#101010;"></div>
<div class="r" style="left:2055.10px;top:1114.80px;width:6.10px;height:2.20px;background:#101010;"></div>
<div class="r" style="left:2224.10px;top:1114.80px;width:6.10px;height:2.20px;background:#101010;"></div>
<div class="r" style="left:2393.10px;top:1114.80px;width:6.10px;height:2.20px;background:#101010;"></div>
<div class="r" style="left:2562.10px;top:1114.80px;width:6.10px;height:2.20px;background:#101010;"></div>
<div class="r" style="left:2731.10px;top:1114.80px;width:6.10px;height:2.20px;background:#101010;"></div>
<div class="r" style="left:143.20px;top:1141.80px;width:6.00px;height:2.20px;background:#101010;"></div>
<div class="t " style="top:1133.00px;font-size:21.8px;color:#101010;left:1299.99px;transform:scaleX(1.0161);transform-origin:0 50%;">Yes</div>
<div class="r" style="left:1548.10px;top:1142.80px;width:6.10px;height:2.20px;background:#101010;"></div>
<div class="r" style="left:1717.10px;top:1142.80px;width:6.10px;height:2.20px;background:#101010;"></div>
<div class="r" style="left:1886.10px;top:1142.80px;width:6.10px;height:2.20px;background:#101010;"></div>
<div class="r" style="left:2055.10px;top:1142.80px;width:6.10px;height:2.20px;background:#101010;"></div>
<div class="r" style="left:2224.10px;top:1142.80px;width:6.10px;height:2.20px;background:#101010;"></div>
<div class="r" style="left:2393.10px;top:1142.80px;width:6.10px;height:2.20px;background:#101010;"></div>
<div class="r" style="left:2562.10px;top:1142.80px;width:6.10px;height:2.20px;background:#101010;"></div>
<div class="r" style="left:2731.10px;top:1142.80px;width:6.10px;height:2.20px;background:#101010;"></div>
<div class="r" style="left:143.20px;top:1169.80px;width:6.00px;height:2.20px;background:#101010;"></div>
<div class="t " style="top:1161.00px;font-size:21.8px;color:#101010;left:1299.99px;transform:scaleX(1.0161);transform-origin:0 50%;">Yes</div>
<div class="r" style="left:1548.10px;top:1170.80px;width:6.10px;height:2.20px;background:#101010;"></div>
<div class="r" style="left:1717.10px;top:1170.80px;width:6.10px;height:2.20px;background:#101010;"></div>
<div class="r" style="left:1886.10px;top:1170.80px;width:6.10px;height:2.20px;background:#101010;"></div>
<div class="r" style="left:2055.10px;top:1170.80px;width:6.10px;height:2.20px;background:#101010;"></div>
<div class="r" style="left:2224.10px;top:1170.80px;width:6.10px;height:2.20px;background:#101010;"></div>
<div class="r" style="left:2393.10px;top:1170.80px;width:6.10px;height:2.20px;background:#101010;"></div>
<div class="r" style="left:2562.10px;top:1170.80px;width:6.10px;height:2.20px;background:#101010;"></div>
<div class="r" style="left:2731.10px;top:1170.80px;width:6.10px;height:2.20px;background:#101010;"></div>
<div class="r" style="left:143.20px;top:1197.80px;width:6.00px;height:2.20px;background:#101010;"></div>
<div class="t " style="top:1189.00px;font-size:21.8px;color:#101010;left:1299.99px;transform:scaleX(1.0161);transform-origin:0 50%;">Yes</div>
<div class="r" style="left:1548.10px;top:1198.80px;width:6.10px;height:2.20px;background:#101010;"></div>
<div class="r" style="left:1717.10px;top:1198.80px;width:6.10px;height:2.20px;background:#101010;"></div>
<div class="r" style="left:1886.10px;top:1198.80px;width:6.10px;height:2.20px;background:#101010;"></div>
<div class="r" style="left:2055.10px;top:1198.80px;width:6.10px;height:2.20px;background:#101010;"></div>
<div class="r" style="left:2224.10px;top:1198.80px;width:6.10px;height:2.20px;background:#101010;"></div>
<div class="r" style="left:2393.10px;top:1198.80px;width:6.10px;height:2.20px;background:#101010;"></div>
<div class="r" style="left:2562.10px;top:1198.80px;width:6.10px;height:2.20px;background:#101010;"></div>
<div class="r" style="left:2731.10px;top:1198.80px;width:6.10px;height:2.20px;background:#101010;"></div>
<div class="r" style="left:137.80px;top:1212.00px;width:2722.20px;height:35.80px;background:#4bb1e8;"></div>
<div class="r" style="left:137.80px;top:1373.20px;width:2722.20px;height:28.20px;background:#4bb1e8;"></div>
<div class="r" style="left:137.80px;top:1457.40px;width:2722.20px;height:28.30px;background:#4bb1e8;"></div>
<div class="r" style="left:137.80px;top:1526.90px;width:2722.20px;height:28.20px;background:#4bb1e8;"></div>
<div class="r" style="left:137.80px;top:1583.40px;width:2722.20px;height:28.20px;background:#4bb1e8;"></div>
<div class="r" style="left:1215.00px;top:1400.80px;width:206.40px;height:1.70px;background:#4bb1e8;"></div>
<div class="r" style="left:1215.00px;top:1554.50px;width:206.40px;height:1.70px;background:#4bb1e8;"></div>
<div class="t " style="top:1217.00px;font-size:28px;color:#fff;font-weight:700;-webkit-text-stroke:0.55px #fff;left:143.92px;transform:scaleX(1.1232);transform-origin:0 50%;">Total</div>
<div class="t " style="top:1220.00px;font-size:22.2px;color:#fff;font-weight:700;-webkit-text-stroke:0.55px #fff;right:1701.28px;transform:scaleX(1.1348);transform-origin:100% 50%;">44,000</div>
<div class="t " style="top:1220.00px;font-size:22.2px;color:#fff;font-weight:700;-webkit-text-stroke:0.55px #fff;right:1325.26px;transform:scaleX(1.1521);transform-origin:100% 50%;">15,667</div>
<div class="t " style="top:1220.00px;font-size:22.2px;color:#fff;font-weight:700;-webkit-text-stroke:0.55px #fff;right:1156.22px;transform:scaleX(1.1744);transform-origin:100% 50%;">11,000</div>
<div class="t " style="top:1220.00px;font-size:22.2px;color:#fff;font-weight:700;-webkit-text-stroke:0.55px #fff;right:987.26px;transform:scaleX(1.1521);transform-origin:100% 50%;">12,000</div>
<div class="t " style="top:1220.00px;font-size:22.2px;color:#fff;font-weight:700;-webkit-text-stroke:0.55px #fff;right:818.39px;transform:scaleX(1.1394);transform-origin:100% 50%;">4,333</div>
<div class="t " style="top:1220.00px;font-size:22.2px;color:#fff;font-weight:700;-webkit-text-stroke:0.55px #fff;right:649.37px;transform:scaleX(1.1607);transform-origin:100% 50%;">1,000</div>
<div class="r" style="left:2384.80px;top:1229.35px;width:8.30px;height:3.00px;background:#fff;"></div>
<div class="r" style="left:2553.80px;top:1229.35px;width:8.30px;height:3.00px;background:#fff;"></div>
<div class="r" style="left:2722.80px;top:1229.35px;width:8.30px;height:3.00px;background:#fff;"></div>
<div class="t " style="top:1378.00px;font-size:22.2px;color:#fff;font-weight:700;-webkit-text-stroke:0.55px #fff;left:142.15px;transform:scaleX(1.0453);transform-origin:0 50%;">Opening Net Book Value</div>
<div class="t " style="top:1406.00px;font-size:21.8px;color:#101010;left:161.94px;transform:scaleX(1.0065);transform-origin:0 50%;">Expenditure - Amortizable</div>
<div class="t " style="top:1434.00px;font-size:21.8px;color:#101010;left:161.92px;transform:scaleX(1.0162);transform-origin:0 50%;">Depreciation (Depreciation Period (Years) - 10)</div>
<div class="t " style="top:1462.00px;font-size:22.2px;color:#fff;font-weight:700;-webkit-text-stroke:0.55px #fff;left:142.16px;transform:scaleX(1.0368);transform-origin:0 50%;">Closing Net Book Value</div>
<div class="t " style="top:1531.00px;font-size:22.2px;color:#fff;font-weight:700;-webkit-text-stroke:0.55px #fff;left:142.15px;transform:scaleX(1.0453);transform-origin:0 50%;">Opening Net Book Value</div>
<div class="t " style="top:1560.00px;font-size:21.8px;color:#101010;left:161.94px;transform:scaleX(1.0059);transform-origin:0 50%;">Expenditure - Non-Amortizable</div>
<div class="t " style="top:1588.00px;font-size:22.2px;color:#fff;font-weight:700;-webkit-text-stroke:0.55px #fff;left:142.16px;transform:scaleX(1.0368);transform-origin:0 50%;">Closing Net Book Value</div>
<div class="r" style="left:1539.80px;top:1387.15px;width:8.30px;height:3.00px;background:#fff;"></div>
<div class="t " style="top:1406.00px;font-size:21.8px;color:#101010;right:1322.51px;transform:scaleX(1.0165);transform-origin:100% 50%;">15,667</div>
<div class="t " style="top:1434.00px;font-size:21.8px;color:#101010;right:1322.53px;transform:scaleX(1.0507);transform-origin:100% 50%;">131</div>
<div class="t " style="top:1462.00px;font-size:22.2px;color:#fff;font-weight:700;-webkit-text-stroke:0.55px #fff;right:1325.26px;transform:scaleX(1.1521);transform-origin:100% 50%;">15,536</div>
<div class="r" style="left:1539.80px;top:1540.85px;width:8.30px;height:3.00px;background:#fff;"></div>
<div class="r" style="left:1548.10px;top:1570.00px;width:6.10px;height:2.20px;background:#101010;"></div>
<div class="r" style="left:1539.80px;top:1597.25px;width:8.30px;height:3.00px;background:#fff;"></div>
<div class="t " style="top:1378.00px;font-size:22.2px;color:#fff;font-weight:700;-webkit-text-stroke:0.55px #fff;right:1156.26px;transform:scaleX(1.1521);transform-origin:100% 50%;">15,536</div>
<div class="t " style="top:1406.00px;font-size:21.8px;color:#101010;right:1153.87px;transform:scaleX(1.0368);transform-origin:100% 50%;">11,000</div>
<div class="t " style="top:1434.00px;font-size:21.8px;color:#101010;right:1153.55px;transform:scaleX(1.0277);transform-origin:100% 50%;">222</div>
<div class="t " style="top:1462.00px;font-size:22.2px;color:#fff;font-weight:700;-webkit-text-stroke:0.55px #fff;right:1157.13px;transform:scaleX(1.1306);transform-origin:100% 50%;">26,314</div>
<div class="r" style="left:1708.80px;top:1540.85px;width:8.30px;height:3.00px;background:#fff;"></div>
<div class="r" style="left:1717.10px;top:1570.00px;width:6.10px;height:2.20px;background:#101010;"></div>
<div class="r" style="left:1708.80px;top:1597.25px;width:8.30px;height:3.00px;background:#fff;"></div>
<div class="t " style="top:1378.00px;font-size:22.2px;color:#fff;font-weight:700;-webkit-text-stroke:0.55px #fff;right:988.13px;transform:scaleX(1.1306);transform-origin:100% 50%;">26,314</div>
<div class="t " style="top:1406.00px;font-size:21.8px;color:#101010;right:984.77px;transform:scaleX(1.0125);transform-origin:100% 50%;">12,000</div>
<div class="t " style="top:1434.00px;font-size:21.8px;color:#101010;right:984.56px;transform:scaleX(1.0203);transform-origin:100% 50%;">322</div>
<div class="t " style="top:1462.00px;font-size:22.2px;color:#fff;font-weight:700;-webkit-text-stroke:0.55px #fff;right:987.28px;transform:scaleX(1.1391);transform-origin:100% 50%;">37,992</div>
<div class="r" style="left:1877.80px;top:1540.85px;width:8.30px;height:3.00px;background:#fff;"></div>
<div class="r" style="left:1886.10px;top:1570.00px;width:6.10px;height:2.20px;background:#101010;"></div>
<div class="r" style="left:1877.80px;top:1597.25px;width:8.30px;height:3.00px;background:#fff;"></div>
<div class="t " style="top:1378.00px;font-size:22.2px;color:#fff;font-weight:700;-webkit-text-stroke:0.55px #fff;right:818.28px;transform:scaleX(1.1391);transform-origin:100% 50%;">37,992</div>
<div class="t " style="top:1406.00px;font-size:21.8px;color:#101010;right:815.66px;transform:scaleX(0.9962);transform-origin:100% 50%;">4,333</div>
<div class="t " style="top:1434.00px;font-size:21.8px;color:#101010;right:815.82px;transform:scaleX(1.0129);transform-origin:100% 50%;">358</div>
<div class="t " style="top:1462.00px;font-size:22.2px;color:#fff;font-weight:700;-webkit-text-stroke:0.55px #fff;right:818.28px;transform:scaleX(1.1348);transform-origin:100% 50%;">41,967</div>
<div class="r" style="left:2046.80px;top:1540.85px;width:8.30px;height:3.00px;background:#fff;"></div>
<div class="r" style="left:2055.10px;top:1570.00px;width:6.10px;height:2.20px;background:#101010;"></div>
<div class="r" style="left:2046.80px;top:1597.25px;width:8.30px;height:3.00px;background:#fff;"></div>
<div class="t " style="top:1378.00px;font-size:22.2px;color:#fff;font-weight:700;-webkit-text-stroke:0.55px #fff;right:649.28px;transform:scaleX(1.1348);transform-origin:100% 50%;">41,967</div>
<div class="t " style="top:1406.00px;font-size:21.8px;color:#101010;right:646.89px;transform:scaleX(1.0154);transform-origin:100% 50%;">1,000</div>
<div class="t " style="top:1434.00px;font-size:21.8px;color:#101010;right:646.56px;transform:scaleX(1.0203);transform-origin:100% 50%;">367</div>
<div class="t " style="top:1462.00px;font-size:22.2px;color:#fff;font-weight:700;-webkit-text-stroke:0.55px #fff;right:649.28px;transform:scaleX(1.1348);transform-origin:100% 50%;">42,600</div>
<div class="r" style="left:2215.80px;top:1540.85px;width:8.30px;height:3.00px;background:#fff;"></div>
<div class="r" style="left:2224.10px;top:1570.00px;width:6.10px;height:2.20px;background:#101010;"></div>
<div class="r" style="left:2215.80px;top:1597.25px;width:8.30px;height:3.00px;background:#fff;"></div>
<div class="t " style="top:1378.00px;font-size:22.2px;color:#fff;font-weight:700;-webkit-text-stroke:0.55px #fff;right:480.28px;transform:scaleX(1.1348);transform-origin:100% 50%;">42,600</div>
<div class="r" style="left:2393.10px;top:1415.90px;width:6.10px;height:2.20px;background:#101010;"></div>
<div class="t " style="top:1434.00px;font-size:21.8px;color:#101010;right:477.56px;transform:scaleX(1.0203);transform-origin:100% 50%;">367</div>
<div class="t " style="top:1462.00px;font-size:22.2px;color:#fff;font-weight:700;-webkit-text-stroke:0.55px #fff;right:480.28px;transform:scaleX(1.1348);transform-origin:100% 50%;">42,233</div>
<div class="r" style="left:2384.80px;top:1540.85px;width:8.30px;height:3.00px;background:#fff;"></div>
<div class="r" style="left:2393.10px;top:1570.00px;width:6.10px;height:2.20px;background:#101010;"></div>
<div class="r" style="left:2384.80px;top:1597.25px;width:8.30px;height:3.00px;background:#fff;"></div>
<div class="t " style="top:1378.00px;font-size:22.2px;color:#fff;font-weight:700;-webkit-text-stroke:0.55px #fff;right:311.28px;transform:scaleX(1.1348);transform-origin:100% 50%;">42,233</div>
<div class="r" style="left:2562.10px;top:1415.90px;width:6.10px;height:2.20px;background:#101010;"></div>
<div class="t " style="top:1434.00px;font-size:21.8px;color:#101010;right:308.56px;transform:scaleX(1.0203);transform-origin:100% 50%;">367</div>
<div class="t " style="top:1462.00px;font-size:22.2px;color:#fff;font-weight:700;-webkit-text-stroke:0.55px #fff;right:311.28px;transform:scaleX(1.1348);transform-origin:100% 50%;">41,867</div>
<div class="r" style="left:2553.80px;top:1540.85px;width:8.30px;height:3.00px;background:#fff;"></div>
<div class="r" style="left:2562.10px;top:1570.00px;width:6.10px;height:2.20px;background:#101010;"></div>
<div class="r" style="left:2553.80px;top:1597.25px;width:8.30px;height:3.00px;background:#fff;"></div>
<div class="t " style="top:1378.00px;font-size:22.2px;color:#fff;font-weight:700;-webkit-text-stroke:0.55px #fff;right:142.28px;transform:scaleX(1.1348);transform-origin:100% 50%;">41,867</div>
<div class="r" style="left:2731.10px;top:1415.90px;width:6.10px;height:2.20px;background:#101010;"></div>
<div class="t " style="top:1434.00px;font-size:21.8px;color:#101010;right:139.56px;transform:scaleX(1.0203);transform-origin:100% 50%;">367</div>
<div class="t " style="top:1462.00px;font-size:22.2px;color:#fff;font-weight:700;-webkit-text-stroke:0.55px #fff;right:142.28px;transform:scaleX(1.1348);transform-origin:100% 50%;">41,500</div>
<div class="r" style="left:2722.80px;top:1540.85px;width:8.30px;height:3.00px;background:#fff;"></div>
<div class="r" style="left:2731.10px;top:1570.00px;width:6.10px;height:2.20px;background:#101010;"></div>
<div class="r" style="left:2722.80px;top:1597.25px;width:8.30px;height:3.00px;background:#fff;"></div>
<div class="r" style="left:1379.10px;top:1415.90px;width:6.10px;height:2.20px;background:#101010;"></div>
<div class="r" style="left:1370.80px;top:1471.35px;width:8.30px;height:3.00px;background:#fff;"></div>
<div class="r" style="left:2840px;top:1373.3px;width:20px;height:28px;overflow:hidden"><div class="t" style="left:11.5px;top:4.70px;font-size:22.2px;font-weight:700;color:#fff;-webkit-text-stroke:0.55px #fff;transform:scaleX(1.13);transform-origin:0 50%">41,133</div></div>
<div class="r" style="left:2840px;top:1457.5px;width:20px;height:28px;overflow:hidden"><div class="t" style="left:11.5px;top:4.50px;font-size:22.2px;font-weight:700;color:#fff;-webkit-text-stroke:0.55px #fff;transform:scaleX(1.13);transform-origin:0 50%">41,133</div></div>
<div class="r" style="left:1420.90px;top:305.00px;width:1.10px;height:1365.00px;background:rgba(120,120,120,0.78);"></div>
<div class="r" style="left:2862.5px;top:281px;width:26px;height:1391px;border-radius:13px;background:#141414"></div>
<svg class="r" style="left:2868.00px;top:285.00px;" width="16" height="12" viewBox="0 0 16 12"><path d="M1.8 10.6 L8 1.6 L14.2 10.6 Z" fill="#8c8c8c" stroke="#8c8c8c" stroke-width="1.6" stroke-linejoin="round"/></svg>
<div class="r" style="left:2869.80px;top:303.50px;width:12.40px;height:1312.00px;background:#9b9b9b;border-radius:6.2px;"></div>
<svg class="r" style="left:2868.00px;top:1652.50px;" width="16" height="12" viewBox="0 0 16 12"><path d="M1.8 1.6 L8 10.6 L14.2 1.6 Z" fill="#8c8c8c" stroke="#8c8c8c" stroke-width="1.6" stroke-linejoin="round"/></svg>
<div class="r" style="left:11.00px;top:1670.00px;width:2880.00px;height:48.30px;background:#0a0a0a;"></div>
<div class="r" style="left:11.00px;top:1718.00px;width:2880.00px;height:1.20px;background:#343434;"></div>
<div class="r" style="left:11.00px;top:1719.20px;width:2880.00px;height:31.80px;background:#131313;"></div>
<svg class="r" style="left:44.50px;top:1684.00px;" width="13" height="18" viewBox="0 0 13 18"><path d="M10.4 1.6 L2.4 8.8 L10.4 16" fill="none" stroke="#8f8f8f" stroke-width="1.7" stroke-linecap="round" stroke-linejoin="round"/></svg>
<svg class="r" style="left:93.00px;top:1684.00px;" width="13" height="18" viewBox="0 0 13 18"><path d="M2.4 1.6 L10.4 8.8 L2.4 16" fill="none" stroke="#d8d8d8" stroke-width="1.7" stroke-linecap="round" stroke-linejoin="round"/></svg>
<div class="t " style="top:1686.00px;font-size:20.6px;color:#f4f4f4;left:189.49px;transform:scaleX(1.013);transform-origin:0 50%;">Contents</div>
<div class="r" style="left:299.30px;top:1676.30px;width:127.50px;height:35.30px;background:#fdee6d;border-radius:7px;"></div>
<div class="t " style="top:1686.00px;font-size:20.6px;color:#141414;left:312.22px;transform:scaleX(1.0179);transform-origin:0 50%;">Dashboard</div>
<div class="r" style="left:439.90px;top:1676.30px;width:105.70px;height:35.30px;background:#fdee6d;border-radius:7px;"></div>
<div class="t " style="top:1686.00px;font-size:20.6px;color:#141414;left:453.50px;transform:scaleX(0.973);transform-origin:0 50%;">Revenue</div>
<div class="r" style="left:558.90px;top:1676.30px;width:157.70px;height:35.30px;background:#fdee6d;border-radius:7px;"></div>
<div class="t " style="top:1686.00px;font-size:20.6px;color:#141414;left:571.06px;transform:scaleX(0.9378);transform-origin:0 50%;">COGS &amp; OPEX</div>
<div class="r" style="left:729.80px;top:1676.30px;width:89.00px;height:35.30px;background:#fdee6d;border-radius:7px;"></div>
<div class="t " style="top:1686.00px;font-size:20.6px;color:#141414;left:742.21px;transform:scaleX(1.0209);transform-origin:0 50%;">Payroll</div>
<div class="r" style="left:932.40px;top:1676.30px;width:112.20px;height:35.30px;background:#fdee6d;border-radius:7px;"></div>
<div class="t " style="top:1686.00px;font-size:20.6px;color:#141414;left:944.70px;transform:scaleX(1.0006);transform-origin:0 50%;">CapTable</div>
<div class="r" style="left:1058.00px;top:1676.30px;width:90.00px;height:35.30px;background:#fdee6d;border-radius:7px;"></div>
<div class="t " style="top:1686.00px;font-size:20.6px;color:#141414;left:1070.58px;transform:scaleX(1.0219);transform-origin:0 50%;">Capital</div>
<div class="r" style="left:1160.80px;top:1676.30px;width:42.00px;height:35.30px;background:#4bb1e8;border-radius:7px;"></div>
<div class="t " style="top:1686.00px;font-size:20.6px;color:#141414;left:1173.18px;transform:scaleX(0.9091);transform-origin:0 50%;">IS</div>
<div class="r" style="left:1215.60px;top:1676.30px;width:48.30px;height:35.30px;background:#4bb1e8;border-radius:7px;"></div>
<div class="t " style="top:1686.00px;font-size:20.6px;color:#141414;left:1228.43px;transform:scaleX(0.8699);transform-origin:0 50%;">CF</div>
<div class="r" style="left:1276.70px;top:1676.30px;width:48.30px;height:35.30px;background:#4bb1e8;border-radius:7px;"></div>
<div class="t " style="top:1686.00px;font-size:20.6px;color:#141414;left:1289.39px;transform:scaleX(0.8606);transform-origin:0 50%;">BS</div>
<div class="r" style="left:1338.00px;top:1676.30px;width:114.70px;height:35.30px;background:#4bb1e8;border-radius:7px;"></div>
<div class="t " style="top:1686.00px;font-size:20.6px;color:#141414;left:1350.33px;transform:scaleX(0.9689);transform-origin:0 50%;">Scenarios</div>
<div class="r" style="left:1465.80px;top:1676.30px;width:115.10px;height:35.30px;background:#4bb1e8;border-radius:7px;"></div>
<div class="t " style="top:1686.00px;font-size:20.6px;color:#141414;left:1479.44px;transform:scaleX(1.0477);transform-origin:0 50%;">Valuation</div>
<div class="r" style="left:1593.90px;top:1676.30px;width:113.90px;height:35.30px;background:#4bb1e8;border-radius:7px;"></div>
<div class="t " style="top:1686.00px;font-size:20.6px;color:#141414;left:1607.40px;transform:scaleX(0.9954);transform-origin:0 50%;">Summary</div>
<div class="r" style="left:1721.20px;top:1676.30px;width:47.70px;height:35.30px;background:#4bb1e8;border-radius:7px;"></div>
<div class="t " style="top:1686.00px;font-size:20.6px;color:#141414;left:1733.31px;transform:scaleX(0.852);transform-origin:0 50%;">BE</div>
<div class="r" style="left:1781.70px;top:1676.30px;width:71.90px;height:35.30px;background:#4bb1e8;border-radius:7px;"></div>
<div class="t " style="top:1686.00px;font-size:20.6px;color:#141414;left:1794.28px;transform:scaleX(0.9286);transform-origin:0 50%;">ROIC</div>
<div class="r" style="left:1866.90px;top:1676.30px;width:84.70px;height:35.30px;background:#4bb1e8;border-radius:7px;"></div>
<div class="t " style="top:1686.00px;font-size:20.6px;color:#141414;left:1879.32px;transform:scaleX(0.978);transform-origin:0 50%;">Charts</div>
<div class="r" style="left:1965.20px;top:1676.30px;width:63.30px;height:35.30px;background:#4bb1e8;border-radius:7px;"></div>
<div class="t " style="top:1686.00px;font-size:20.6px;color:#141414;left:1977.52px;transform:scaleX(0.9);transform-origin:0 50%;">KPIs</div>
<div class="r" style="left:2042px;top:1676.3px;width:30px;height:35.3px;overflow:hidden"><div class="r" style="left:0;top:0;width:90px;height:35.3px;border-radius:7px;background:#4bb1e8"></div><div class="t" style="left:12.5px;top:9.70px;font-size:20.6px;color:#141414;transform:scaleX(1.05);transform-origin:0 50%">Sc</div></div>
<div class="r" style="left:291.70px;top:1679.80px;width:1.10px;height:28.00px;background:#6e6e6e;"></div>
<div class="r" style="left:432.90px;top:1679.80px;width:1.10px;height:28.00px;background:#6e6e6e;"></div>
<div class="r" style="left:552.20px;top:1679.80px;width:1.10px;height:28.00px;background:#6e6e6e;"></div>
<div class="r" style="left:723.10px;top:1679.80px;width:1.10px;height:28.00px;background:#6e6e6e;"></div>
<div class="r" style="left:825.40px;top:1679.80px;width:1.10px;height:28.00px;background:#6e6e6e;"></div>
<div class="r" style="left:925.40px;top:1679.80px;width:1.10px;height:28.00px;background:#6e6e6e;"></div>
<div class="r" style="left:1050.90px;top:1679.80px;width:1.10px;height:28.00px;background:#6e6e6e;"></div>
<div class="r" style="left:1154.00px;top:1679.80px;width:1.10px;height:28.00px;background:#6e6e6e;"></div>
<div class="r" style="left:1208.90px;top:1679.80px;width:1.10px;height:28.00px;background:#6e6e6e;"></div>
<div class="r" style="left:1270.00px;top:1679.80px;width:1.10px;height:28.00px;background:#6e6e6e;"></div>
<div class="r" style="left:1330.80px;top:1679.80px;width:1.10px;height:28.00px;background:#6e6e6e;"></div>
<div class="r" style="left:1458.80px;top:1679.80px;width:1.10px;height:28.00px;background:#6e6e6e;"></div>
<div class="r" style="left:1586.90px;top:1679.80px;width:1.10px;height:28.00px;background:#6e6e6e;"></div>
<div class="r" style="left:1713.90px;top:1679.80px;width:1.10px;height:28.00px;background:#6e6e6e;"></div>
<div class="r" style="left:1775.00px;top:1679.80px;width:1.10px;height:28.00px;background:#6e6e6e;"></div>
<div class="r" style="left:1859.90px;top:1679.80px;width:1.10px;height:28.00px;background:#6e6e6e;"></div>
<div class="r" style="left:1957.90px;top:1679.80px;width:1.10px;height:28.00px;background:#6e6e6e;"></div>
<div class="r" style="left:2034.50px;top:1679.80px;width:1.10px;height:28.00px;background:#6e6e6e;"></div>
<div class="r" style="left:824px;top:1670px;width:104px;height:9px;background:#fff"></div>
<div class="r" style="left:818.5px;top:1670px;width:13.6px;height:12px;background:#0a0a0a;border-top-right-radius:6.5px"></div>
<div class="r" style="left:919.3px;top:1670px;width:13.6px;height:12px;background:#0a0a0a;border-top-left-radius:6.5px"></div>
<div class="r" style="left:832.1px;top:1669.5px;width:87.2px;height:42.6px;border-radius:0 0 7px 7px;background:linear-gradient(#ffffff 0%, #fffef4 45%, #fcf9dc 100%);box-shadow:0 1px 2px rgba(160,160,160,.55)"></div>
<div class="t " style="top:1681.00px;font-size:20.6px;color:#1e1e1e;left:844.00px;transform:scaleX(0.9026);transform-origin:0 50%;-webkit-text-stroke:0.45px #1e1e1e;">CAPEX</div>
<div class="r" style="left:844.30px;top:1704.80px;width:62.60px;height:3.20px;background:#19854a;"></div>
<div class="r" style="left:2087.6px;top:1691.6px;width:3.8px;height:3.8px;border-radius:50%;background:#e6e6e6"></div>
<div class="r" style="left:2093.2px;top:1691.6px;width:3.8px;height:3.8px;border-radius:50%;background:#e6e6e6"></div>
<div class="r" style="left:2098.8px;top:1691.6px;width:3.8px;height:3.8px;border-radius:50%;background:#e6e6e6"></div>
<div class="r" style="left:2135.30px;top:1692.60px;width:16.40px;height:1.70px;background:#e6e6e6;"></div>
<div class="r" style="left:2142.60px;top:1685.20px;width:1.70px;height:16.40px;background:#e6e6e6;"></div>
<div class="r" style="left:2189.6px;top:1687.4px;width:3.4px;height:3.4px;border-radius:50%;background:#e6e6e6"></div>
<div class="r" style="left:2189.6px;top:1693.1px;width:3.4px;height:3.4px;border-radius:50%;background:#e6e6e6"></div>
<div class="r" style="left:2189.6px;top:1698.8px;width:3.4px;height:3.4px;border-radius:50%;background:#e6e6e6"></div>
<div class="r" style="left:2216.3px;top:1681px;width:643.5px;height:25.6px;border-radius:12.8px;background:#151515"></div>
<svg class="r" style="left:2223.50px;top:1686.00px;" width="12" height="16" viewBox="0 0 12 16"><path d="M10.4 1.8 L1.8 7.8 L10.4 13.8 Z" fill="#9a9a9a" stroke="#9a9a9a" stroke-width="1.4" stroke-linejoin="round"/></svg>
<div class="r" style="left:2242.00px;top:1687.30px;width:75.40px;height:12.30px;background:#9b9b9b;border-radius:6.2px;"></div>
<svg class="r" style="left:2842.50px;top:1686.00px;" width="12" height="16" viewBox="0 0 12 16"><path d="M1.6 1.8 L10.2 7.8 L1.6 13.8 Z" fill="#9a9a9a" stroke="#9a9a9a" stroke-width="1.4" stroke-linejoin="round"/></svg>
<div class="t " style="top:1728.00px;font-size:16.6px;color:#e8e8e8;left:25.96px;transform:scaleX(0.9112);transform-origin:0 50%;">Ready</div>
<svg class="r" style="left:98.50px;top:1726.00px;" width="23" height="20" viewBox="0 0 23 20"><path d="M1.2 1.2 H21.4 V8 M1.2 1.2 V17.2 H8.5 M1.2 5 H21.4 M4.4 8.6 H9.4 M4.4 12.2 H8" fill="none" stroke="#e0e0e0" stroke-width="1.5"/><circle cx="15.6" cy="12.6" r="6" fill="none" stroke="#e0e0e0" stroke-width="1.6"/><circle cx="15.6" cy="12.6" r="2.5" fill="#e0e0e0"/></svg>
<svg class="r" style="left:145.50px;top:1723.60px;" width="23" height="23" viewBox="0 0 23 23"><circle cx="8.8" cy="3.7" r="2.35" fill="none" stroke="#ececec" stroke-width="1.45"/><path d="M2.2 7 L8.8 8.8 L15.4 7 M8.8 8.8 V12.6 M8.8 12.6 L5.4 19.6 M8.8 12.6 L11 15.2" fill="none" stroke="#ececec" stroke-width="3.9" stroke-linecap="round" stroke-linejoin="round"/><path d="M2.2 7 L8.8 8.8 L15.4 7 M8.8 8.8 V12.6 M8.8 12.6 L5.4 19.6 M8.8 12.6 L11 15.2" fill="none" stroke="#131313" stroke-width="1.25" stroke-linecap="round" stroke-linejoin="round"/><path d="M12 14 L20.6 21 M20.6 14 L12 21" stroke="#ececec" stroke-width="1.5" stroke-linecap="round"/></svg>
<div class="t " style="top:1727.00px;font-size:16.2px;color:#f2f2f2;font-weight:700;left:172.91px;transform:scaleX(0.9709);transform-origin:0 50%;-webkit-text-stroke:0.4px #f2f2f2;">Accessibility: Investigate</div>
<div class="r" style="left:2445.40px;top:1719.40px;width:59.40px;height:31.40px;background:#262626;"></div>
<svg class="r" style="left:2464.00px;top:1724.50px;" width="21" height="20" viewBox="0 0 21 20"><rect x="1" y="1" width="18.4" height="17.6" fill="none" stroke="#f0f0f0" stroke-width="1.5"/><path d="M7.1 1 V18.6 M13.3 1 V18.6 M1 6.9 H19.4 M1 12.7 H19.4" stroke="#f0f0f0" stroke-width="1.4"/></svg>
<svg class="r" style="left:2524.30px;top:1724.50px;" width="23" height="20" viewBox="0 0 23 20"><rect x="1" y="1" width="20" height="17.6" fill="none" stroke="#e6e6e6" stroke-width="1.5"/><rect x="5.4" y="4.6" width="11.2" height="10.4" fill="none" stroke="#e6e6e6" stroke-width="1.4"/><path d="M7.6 7.8 H14.4 M7.6 10.2 H14.4 M7.6 12.4 H14.4" stroke="#e6e6e6" stroke-width="1"/></svg>
<svg class="r" style="left:2583.60px;top:1724.50px;" width="23" height="20" viewBox="0 0 23 20"><rect x="1" y="1" width="20" height="17.6" fill="none" stroke="#e6e6e6" stroke-width="1.5"/><path d="M6.6 1 V10.8 H14.8 V1" fill="none" stroke="#e6e6e6" stroke-width="1.5"/><path d="M14.8 10.8 H21" stroke="#e6e6e6" stroke-width="1.5"/></svg>
<div class="r" style="left:2632.40px;top:1734.50px;width:11.60px;height:1.20px;background:#c8c8c8;"></div>
<div class="r" style="left:2652.90px;top:1734.50px;width:147.30px;height:1.20px;background:#9a9a9a;"></div>
<div class="r" style="left:2725.80px;top:1729.60px;width:1.40px;height:11.00px;background:#9a9a9a;"></div>
<div class="r" style="left:2733.50px;top:1726.90px;width:7.30px;height:15.70px;background:#b8b8b8;"></div>
<div class="r" style="left:2809.20px;top:1734.50px;width:11.60px;height:1.20px;background:#c8c8c8;"></div>
<div class="r" style="left:2814.40px;top:1729.30px;width:1.20px;height:11.60px;background:#c8c8c8;"></div>
<div class="t " style="top:1728.00px;font-size:16.6px;color:#e8e8e8;left:2839.11px;transform:scaleX(0.9481);transform-origin:0 50%;">140%</div>
</body></html>
